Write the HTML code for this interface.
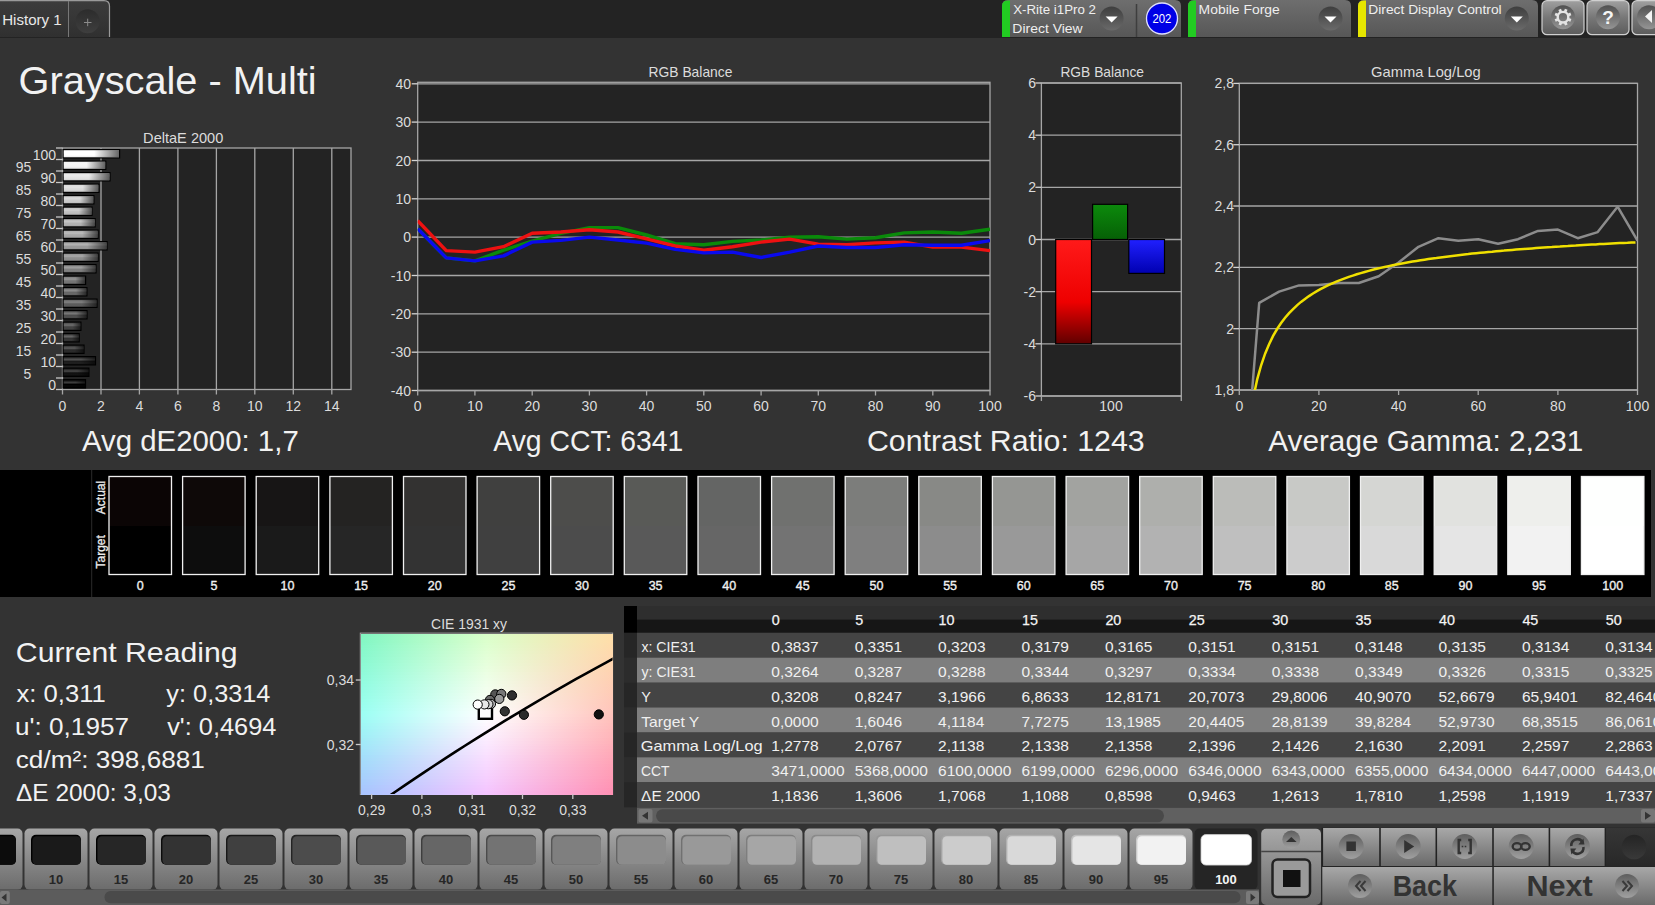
<!DOCTYPE html><html><head><meta charset="utf-8"><title>CalMAN Grayscale - Multi</title><style>
html,body{margin:0;padding:0;background:#333;overflow:hidden;}
body{width:1655px;height:905px;position:relative;font-family:"Liberation Sans", sans-serif;}
svg text{font-family:"Liberation Sans", sans-serif;}
</style></head><body>
<svg width="1655" height="905" viewBox="0 0 1655 905" style="position:absolute;left:0;top:0">
<defs>
<linearGradient id="tabg" x1="0" y1="0" x2="0" y2="1"><stop offset="0" stop-color="#3c3c3c"/><stop offset="1" stop-color="#303030"/></linearGradient>
<linearGradient id="devg" x1="0" y1="0" x2="0" y2="1"><stop offset="0" stop-color="#6e6e6e"/><stop offset="1" stop-color="#575757"/></linearGradient>
<radialGradient id="ddg" cx="0.5" cy="0.5" r="0.5"><stop offset="0" stop-color="#555"/><stop offset="1" stop-color="#4a4a4a"/></radialGradient>
<linearGradient id="ddl" x1="0" y1="0" x2="0" y2="1"><stop offset="0" stop-color="#3e3e3e"/><stop offset="1" stop-color="#6a6a6a"/></linearGradient>
<linearGradient id="btng" x1="0" y1="0" x2="0" y2="1"><stop offset="0" stop-color="#a0a0a0"/><stop offset="0.5" stop-color="#777"/><stop offset="1" stop-color="#5c5c5c"/></linearGradient>
<linearGradient id="tbic" x1="0" y1="0" x2="0" y2="1"><stop offset="0" stop-color="#505050"/><stop offset="1" stop-color="#959595"/></linearGradient>
<linearGradient id="patg" x1="0" y1="0" x2="0" y2="1"><stop offset="0" stop-color="#a6a6a6"/><stop offset="1" stop-color="#6c6c6c"/></linearGradient>
<linearGradient id="ctlg" x1="0" y1="0" x2="0" y2="1"><stop offset="0" stop-color="#a8a8a8"/><stop offset="1" stop-color="#6a6a6a"/></linearGradient>
<linearGradient id="icog" x1="0" y1="0" x2="0" y2="1"><stop offset="0" stop-color="#5e5e5e"/><stop offset="1" stop-color="#a0a0a0"/></linearGradient>
<linearGradient id="redg" x1="0" y1="0" x2="0" y2="1"><stop offset="0" stop-color="#ff1a1a"/><stop offset="0.6" stop-color="#ee0000"/><stop offset="1" stop-color="#600000"/></linearGradient>
<linearGradient id="grng" x1="0" y1="0" x2="0" y2="1"><stop offset="0" stop-color="#0c8a0c"/><stop offset="1" stop-color="#066006"/></linearGradient>
<linearGradient id="blug" x1="0" y1="0" x2="0" y2="1"><stop offset="0" stop-color="#2020ff"/><stop offset="1" stop-color="#0000b0"/></linearGradient>
<linearGradient id="barhl" x1="0" y1="0" x2="0" y2="1"><stop offset="0" stop-color="#fff" stop-opacity="0.05"/><stop offset="0.35" stop-color="#fff" stop-opacity="0.25"/><stop offset="0.6" stop-color="#fff" stop-opacity="0"/><stop offset="1" stop-color="#000" stop-opacity="0.1"/></linearGradient>
<linearGradient id="barsh" x1="0" y1="0" x2="1" y2="0"><stop offset="0" stop-color="#000" stop-opacity="0"/><stop offset="0.55" stop-color="#000" stop-opacity="0"/><stop offset="1" stop-color="#000" stop-opacity="0.6"/></linearGradient>
</defs>
<rect x="0" y="0" width="1655" height="38" fill="#232323"/>
<path d="M0 0 H104 Q110 0 110 6 V37 H0 Z" fill="url(#tabg)"/>
<path d="M0 0.6 H104 Q109.5 0.6 109.5 6 V37" fill="none" stroke="#9a9a9a" stroke-width="1.2"/>
<line x1="68.5" y1="1" x2="68.5" y2="37" stroke="#777" stroke-width="1"/>
<text x="2.19" y="25.00" font-size="14.7" fill="#e8e8e8" textLength="59.49" lengthAdjust="spacingAndGlyphs">History 1</text>
<linearGradient id="plusg" x1="0" y1="0" x2="0" y2="1"><stop offset="0" stop-color="#2c2c2c"/><stop offset="1" stop-color="#3e3e3e"/></linearGradient>
<circle cx="87.6" cy="21.3" r="12" fill="url(#plusg)"/>
<path d="M84 22.5 H91.5 M87.7 18.7 V26.2" stroke="#8c8c8c" stroke-width="1"/>
<path d="M1002 37 V6 Q1002 0 1008 0 H1175 Q1181 0 1181 6 V37 Z" fill="url(#devg)"/>
<path d="M1002 37 V6 Q1002 0.5 1008 0.5 H1010 V37 Z" fill="#22cc22"/>
<text x="1013.17" y="14.30" font-size="12.5" fill="#efefef" textLength="82.80" lengthAdjust="spacingAndGlyphs">X-Rite i1Pro 2</text>
<text x="1012.39" y="32.60" font-size="12.5" fill="#efefef" textLength="70.20" lengthAdjust="spacingAndGlyphs">Direct View</text>
<circle cx="1111.6" cy="18.5" r="12" fill="url(#ddl)"/>
<path d="M1105.6 16.5 L1117.6 16.5 L1111.6 22.5 Z" fill="#fff"/>
<line x1="1136.5" y1="4" x2="1136.5" y2="37" stroke="#3e3e3e" stroke-width="1.5"/>
<circle cx="1162" cy="18.5" r="15.5" fill="#0000e6" stroke="#e0e0ff" stroke-width="1.3"/>
<text x="1152.43" y="22.60" font-size="12.5" fill="#fff" textLength="18.98" lengthAdjust="spacingAndGlyphs">202</text>
<path d="M1188 37 V6 Q1188 0 1194 0 H1345 Q1351 0 1351 6 V37 Z" fill="url(#devg)"/>
<path d="M1188 37 V6 Q1188 0.5 1194 0.5 H1196 V37 Z" fill="#22cc22"/>
<text x="1198.59" y="14.30" font-size="12.5" fill="#efefef" textLength="81.15" lengthAdjust="spacingAndGlyphs">Mobile Forge</text>
<circle cx="1330.5" cy="18.5" r="12" fill="url(#ddl)"/>
<path d="M1324.5 16.5 L1336.5 16.5 L1330.5 22.5 Z" fill="#fff"/>
<path d="M1358 37 V6 Q1358 0 1364 0 H1532 Q1538 0 1538 6 V37 Z" fill="url(#devg)"/>
<path d="M1358 37 V6 Q1358 0.5 1364 0.5 H1366 V37 Z" fill="#e6e600"/>
<text x="1368.30" y="13.90" font-size="12.5" fill="#efefef" textLength="133.40" lengthAdjust="spacingAndGlyphs">Direct Display Control</text>
<circle cx="1516.8" cy="18.5" r="12" fill="url(#ddl)"/>
<path d="M1510.8 16.5 L1522.8 16.5 L1516.8 22.5 Z" fill="#fff"/>
<rect x="1542.0" y="0.7" width="42.0" height="34" rx="5" fill="url(#btng)" stroke="#d0d0d0" stroke-width="1.2"/>
<circle cx="1563.0" cy="17.2" r="12" fill="url(#tbic)"/>
<rect x="1561.60" y="8.70" width="2.8" height="3.4" fill="#e4e4e4" transform="rotate(22 1563.0 17.2)"/><rect x="1561.60" y="8.70" width="2.8" height="3.4" fill="#e4e4e4" transform="rotate(67 1563.0 17.2)"/><rect x="1561.60" y="8.70" width="2.8" height="3.4" fill="#e4e4e4" transform="rotate(112 1563.0 17.2)"/><rect x="1561.60" y="8.70" width="2.8" height="3.4" fill="#e4e4e4" transform="rotate(157 1563.0 17.2)"/><rect x="1561.60" y="8.70" width="2.8" height="3.4" fill="#e4e4e4" transform="rotate(202 1563.0 17.2)"/><rect x="1561.60" y="8.70" width="2.8" height="3.4" fill="#e4e4e4" transform="rotate(247 1563.0 17.2)"/><rect x="1561.60" y="8.70" width="2.8" height="3.4" fill="#e4e4e4" transform="rotate(292 1563.0 17.2)"/><rect x="1561.60" y="8.70" width="2.8" height="3.4" fill="#e4e4e4" transform="rotate(337 1563.0 17.2)"/>
<circle cx="1563.0" cy="17.2" r="5.3" fill="none" stroke="#e4e4e4" stroke-width="2.4"/>
<rect x="1587.0" y="0.7" width="42.0" height="34" rx="5" fill="url(#btng)" stroke="#d0d0d0" stroke-width="1.2"/>
<circle cx="1608.0" cy="17.2" r="12" fill="url(#tbic)"/>
<text x="1608.0" y="24.3" font-size="19" font-weight="bold" fill="#f6f6f6" text-anchor="middle">?</text>
<rect x="1632" y="0.7" width="40" height="34" rx="5" fill="url(#btng)" stroke="#d0d0d0" stroke-width="1.2"/>
<circle cx="1649" cy="17.2" r="12" fill="url(#tbic)"/>
<path d="M1645 16.5 L1652 10 V23 Z" fill="#f4f4f4"/>
<text x="18.61" y="93.70" font-size="38.5" fill="#f2f2f2" textLength="298.03" lengthAdjust="spacingAndGlyphs">Grayscale - Multi</text>
<rect x="62.5" y="148.0" width="288.5" height="241.5" fill="#232323" stroke="#a6a6a6" stroke-width="1.3"/>
<line x1="101.0" y1="148.0" x2="101.0" y2="389.5" stroke="#a6a6a6" stroke-width="1.3"/>
<line x1="139.4" y1="148.0" x2="139.4" y2="389.5" stroke="#a6a6a6" stroke-width="1.3"/>
<line x1="177.9" y1="148.0" x2="177.9" y2="389.5" stroke="#a6a6a6" stroke-width="1.3"/>
<line x1="216.4" y1="148.0" x2="216.4" y2="389.5" stroke="#a6a6a6" stroke-width="1.3"/>
<line x1="254.8" y1="148.0" x2="254.8" y2="389.5" stroke="#a6a6a6" stroke-width="1.3"/>
<line x1="293.3" y1="148.0" x2="293.3" y2="389.5" stroke="#a6a6a6" stroke-width="1.3"/>
<line x1="331.8" y1="148.0" x2="331.8" y2="389.5" stroke="#a6a6a6" stroke-width="1.3"/>
<line x1="62.5" y1="389.5" x2="62.5" y2="394.5" stroke="#a6a6a6" stroke-width="1.3"/>
<text x="62.5" y="411.0" font-size="14" fill="#dcdcdc" text-anchor="middle">0</text>
<line x1="101.0" y1="389.5" x2="101.0" y2="394.5" stroke="#a6a6a6" stroke-width="1.3"/>
<text x="101.0" y="411.0" font-size="14" fill="#dcdcdc" text-anchor="middle">2</text>
<line x1="139.4" y1="389.5" x2="139.4" y2="394.5" stroke="#a6a6a6" stroke-width="1.3"/>
<text x="139.4" y="411.0" font-size="14" fill="#dcdcdc" text-anchor="middle">4</text>
<line x1="177.9" y1="389.5" x2="177.9" y2="394.5" stroke="#a6a6a6" stroke-width="1.3"/>
<text x="177.9" y="411.0" font-size="14" fill="#dcdcdc" text-anchor="middle">6</text>
<line x1="216.4" y1="389.5" x2="216.4" y2="394.5" stroke="#a6a6a6" stroke-width="1.3"/>
<text x="216.4" y="411.0" font-size="14" fill="#dcdcdc" text-anchor="middle">8</text>
<line x1="254.8" y1="389.5" x2="254.8" y2="394.5" stroke="#a6a6a6" stroke-width="1.3"/>
<text x="254.8" y="411.0" font-size="14" fill="#dcdcdc" text-anchor="middle">10</text>
<line x1="293.3" y1="389.5" x2="293.3" y2="394.5" stroke="#a6a6a6" stroke-width="1.3"/>
<text x="293.3" y="411.0" font-size="14" fill="#dcdcdc" text-anchor="middle">12</text>
<line x1="331.8" y1="389.5" x2="331.8" y2="394.5" stroke="#a6a6a6" stroke-width="1.3"/>
<text x="331.8" y="411.0" font-size="14" fill="#dcdcdc" text-anchor="middle">14</text>
<text x="143.13" y="143.10" font-size="14.5" fill="#dcdcdc" textLength="80.16" lengthAdjust="spacingAndGlyphs">DeltaE 2000</text>
<line x1="56" y1="148.0" x2="62.5" y2="148.0" stroke="#c8c8c8" stroke-width="1.3"/>
<line x1="56" y1="159.5" x2="62.5" y2="159.5" stroke="#c8c8c8" stroke-width="1.3"/>
<line x1="56" y1="171.0" x2="62.5" y2="171.0" stroke="#c8c8c8" stroke-width="1.3"/>
<line x1="56" y1="182.5" x2="62.5" y2="182.5" stroke="#c8c8c8" stroke-width="1.3"/>
<line x1="56" y1="194.0" x2="62.5" y2="194.0" stroke="#c8c8c8" stroke-width="1.3"/>
<line x1="56" y1="205.5" x2="62.5" y2="205.5" stroke="#c8c8c8" stroke-width="1.3"/>
<line x1="56" y1="217.0" x2="62.5" y2="217.0" stroke="#c8c8c8" stroke-width="1.3"/>
<line x1="56" y1="228.5" x2="62.5" y2="228.5" stroke="#c8c8c8" stroke-width="1.3"/>
<line x1="56" y1="240.0" x2="62.5" y2="240.0" stroke="#c8c8c8" stroke-width="1.3"/>
<line x1="56" y1="251.5" x2="62.5" y2="251.5" stroke="#c8c8c8" stroke-width="1.3"/>
<line x1="56" y1="263.0" x2="62.5" y2="263.0" stroke="#c8c8c8" stroke-width="1.3"/>
<line x1="56" y1="274.5" x2="62.5" y2="274.5" stroke="#c8c8c8" stroke-width="1.3"/>
<line x1="56" y1="286.0" x2="62.5" y2="286.0" stroke="#c8c8c8" stroke-width="1.3"/>
<line x1="56" y1="297.5" x2="62.5" y2="297.5" stroke="#c8c8c8" stroke-width="1.3"/>
<line x1="56" y1="309.0" x2="62.5" y2="309.0" stroke="#c8c8c8" stroke-width="1.3"/>
<line x1="56" y1="320.5" x2="62.5" y2="320.5" stroke="#c8c8c8" stroke-width="1.3"/>
<line x1="56" y1="332.0" x2="62.5" y2="332.0" stroke="#c8c8c8" stroke-width="1.3"/>
<line x1="56" y1="343.5" x2="62.5" y2="343.5" stroke="#c8c8c8" stroke-width="1.3"/>
<line x1="56" y1="355.0" x2="62.5" y2="355.0" stroke="#c8c8c8" stroke-width="1.3"/>
<line x1="56" y1="366.5" x2="62.5" y2="366.5" stroke="#c8c8c8" stroke-width="1.3"/>
<line x1="56" y1="378.0" x2="62.5" y2="378.0" stroke="#c8c8c8" stroke-width="1.3"/>
<line x1="56" y1="389.5" x2="62.5" y2="389.5" stroke="#c8c8c8" stroke-width="1.3"/>
<rect x="63.1" y="149.6" width="56.5" height="8.3" fill="#ffffff" stroke="#000" stroke-width="1.2"/>
<rect x="63.7" y="150.2" width="55.3" height="7.1" fill="url(#barhl)"/>
<rect x="63.7" y="150.2" width="55.3" height="7.1" fill="url(#barsh)"/>
<text x="56.0" y="159.8" font-size="14" fill="#dcdcdc" text-anchor="end">100</text>
<rect x="63.1" y="161.1" width="42.7" height="8.3" fill="#f2f2f2" stroke="#000" stroke-width="1.2"/>
<rect x="63.7" y="161.7" width="41.5" height="7.1" fill="url(#barhl)"/>
<rect x="63.7" y="161.7" width="41.5" height="7.1" fill="url(#barsh)"/>
<text x="31.3" y="171.6" font-size="14" fill="#dcdcdc" text-anchor="end">95</text>
<rect x="63.1" y="172.6" width="46.9" height="8.3" fill="#e5e5e5" stroke="#000" stroke-width="1.2"/>
<rect x="63.7" y="173.2" width="45.7" height="7.1" fill="url(#barhl)"/>
<rect x="63.7" y="173.2" width="45.7" height="7.1" fill="url(#barsh)"/>
<text x="56.0" y="182.8" font-size="14" fill="#dcdcdc" text-anchor="end">90</text>
<rect x="63.1" y="184.1" width="35.8" height="8.3" fill="#d9d9d9" stroke="#000" stroke-width="1.2"/>
<rect x="63.7" y="184.7" width="34.6" height="7.1" fill="url(#barhl)"/>
<rect x="63.7" y="184.7" width="34.6" height="7.1" fill="url(#barsh)"/>
<text x="31.3" y="194.6" font-size="14" fill="#dcdcdc" text-anchor="end">85</text>
<rect x="63.1" y="195.6" width="30.8" height="8.3" fill="#cccccc" stroke="#000" stroke-width="1.2"/>
<rect x="63.7" y="196.2" width="29.6" height="7.1" fill="url(#barhl)"/>
<rect x="63.7" y="196.2" width="29.6" height="7.1" fill="url(#barsh)"/>
<text x="56.0" y="205.8" font-size="14" fill="#dcdcdc" text-anchor="end">80</text>
<rect x="63.1" y="207.1" width="29.0" height="8.3" fill="#bfbfbf" stroke="#000" stroke-width="1.2"/>
<rect x="63.7" y="207.7" width="27.8" height="7.1" fill="url(#barhl)"/>
<rect x="63.7" y="207.7" width="27.8" height="7.1" fill="url(#barsh)"/>
<text x="31.3" y="217.6" font-size="14" fill="#dcdcdc" text-anchor="end">75</text>
<rect x="63.1" y="218.6" width="32.1" height="8.3" fill="#b2b2b2" stroke="#000" stroke-width="1.2"/>
<rect x="63.7" y="219.2" width="30.9" height="7.1" fill="url(#barhl)"/>
<rect x="63.7" y="219.2" width="30.9" height="7.1" fill="url(#barsh)"/>
<text x="56.0" y="228.8" font-size="14" fill="#dcdcdc" text-anchor="end">70</text>
<rect x="63.1" y="230.1" width="35.0" height="8.3" fill="#a6a6a6" stroke="#000" stroke-width="1.2"/>
<rect x="63.7" y="230.7" width="33.8" height="7.1" fill="url(#barhl)"/>
<rect x="63.7" y="230.7" width="33.8" height="7.1" fill="url(#barsh)"/>
<text x="31.3" y="240.6" font-size="14" fill="#dcdcdc" text-anchor="end">65</text>
<rect x="63.1" y="241.6" width="44.0" height="8.3" fill="#999999" stroke="#000" stroke-width="1.2"/>
<rect x="63.7" y="242.2" width="42.8" height="7.1" fill="url(#barhl)"/>
<rect x="63.7" y="242.2" width="42.8" height="7.1" fill="url(#barsh)"/>
<text x="56.0" y="251.8" font-size="14" fill="#dcdcdc" text-anchor="end">60</text>
<rect x="63.1" y="253.1" width="35.0" height="8.3" fill="#8c8c8c" stroke="#000" stroke-width="1.2"/>
<rect x="63.7" y="253.7" width="33.8" height="7.1" fill="url(#barhl)"/>
<rect x="63.7" y="253.7" width="33.8" height="7.1" fill="url(#barsh)"/>
<text x="31.3" y="263.6" font-size="14" fill="#dcdcdc" text-anchor="end">55</text>
<rect x="63.1" y="264.6" width="32.9" height="8.3" fill="#7f7f7f" stroke="#000" stroke-width="1.2"/>
<rect x="63.7" y="265.2" width="31.7" height="7.1" fill="url(#barhl)"/>
<rect x="63.7" y="265.2" width="31.7" height="7.1" fill="url(#barsh)"/>
<text x="56.0" y="274.8" font-size="14" fill="#dcdcdc" text-anchor="end">50</text>
<rect x="63.1" y="276.1" width="22.5" height="8.3" fill="#737373" stroke="#000" stroke-width="1.2"/>
<rect x="63.7" y="276.7" width="21.3" height="7.1" fill="url(#barhl)"/>
<rect x="63.7" y="276.7" width="21.3" height="7.1" fill="url(#barsh)"/>
<text x="31.3" y="286.6" font-size="14" fill="#dcdcdc" text-anchor="end">45</text>
<rect x="63.1" y="287.6" width="23.8" height="8.3" fill="#666666" stroke="#000" stroke-width="1.2"/>
<rect x="63.7" y="288.2" width="22.6" height="7.1" fill="url(#barhl)"/>
<rect x="63.7" y="288.2" width="22.6" height="7.1" fill="url(#barsh)"/>
<text x="56.0" y="297.8" font-size="14" fill="#dcdcdc" text-anchor="end">40</text>
<rect x="63.1" y="299.1" width="33.9" height="8.3" fill="#595959" stroke="#000" stroke-width="1.2"/>
<rect x="63.7" y="299.7" width="32.7" height="7.1" fill="url(#barhl)"/>
<rect x="63.7" y="299.7" width="32.7" height="7.1" fill="url(#barsh)"/>
<text x="31.3" y="309.6" font-size="14" fill="#dcdcdc" text-anchor="end">35</text>
<rect x="63.1" y="310.6" width="23.9" height="8.3" fill="#4c4c4c" stroke="#000" stroke-width="1.2"/>
<rect x="63.7" y="311.2" width="22.7" height="7.1" fill="url(#barhl)"/>
<rect x="63.7" y="311.2" width="22.7" height="7.1" fill="url(#barsh)"/>
<text x="56.0" y="320.8" font-size="14" fill="#dcdcdc" text-anchor="end">30</text>
<rect x="63.1" y="322.1" width="17.8" height="8.3" fill="#404040" stroke="#000" stroke-width="1.2"/>
<rect x="63.7" y="322.7" width="16.6" height="7.1" fill="url(#barhl)"/>
<rect x="63.7" y="322.7" width="16.6" height="7.1" fill="url(#barsh)"/>
<text x="31.3" y="332.6" font-size="14" fill="#dcdcdc" text-anchor="end">25</text>
<rect x="63.1" y="333.6" width="16.1" height="8.3" fill="#333333" stroke="#000" stroke-width="1.2"/>
<rect x="63.7" y="334.2" width="14.9" height="7.1" fill="url(#barhl)"/>
<rect x="63.7" y="334.2" width="14.9" height="7.1" fill="url(#barsh)"/>
<text x="56.0" y="343.8" font-size="14" fill="#dcdcdc" text-anchor="end">20</text>
<rect x="63.1" y="345.1" width="20.9" height="8.3" fill="#262626" stroke="#000" stroke-width="1.2"/>
<rect x="63.7" y="345.7" width="19.7" height="7.1" fill="url(#barhl)"/>
<rect x="63.7" y="345.7" width="19.7" height="7.1" fill="url(#barsh)"/>
<text x="31.3" y="355.6" font-size="14" fill="#dcdcdc" text-anchor="end">15</text>
<rect x="63.1" y="356.6" width="32.4" height="8.3" fill="#1a1a1a" stroke="#000" stroke-width="1.2"/>
<rect x="63.7" y="357.2" width="31.2" height="7.1" fill="url(#barhl)"/>
<rect x="63.7" y="357.2" width="31.2" height="7.1" fill="url(#barsh)"/>
<text x="56.0" y="366.8" font-size="14" fill="#dcdcdc" text-anchor="end">10</text>
<rect x="63.1" y="368.1" width="25.8" height="8.3" fill="#0d0d0d" stroke="#000" stroke-width="1.2"/>
<rect x="63.7" y="368.7" width="24.6" height="7.1" fill="url(#barhl)"/>
<rect x="63.7" y="368.7" width="24.6" height="7.1" fill="url(#barsh)"/>
<text x="31.3" y="378.6" font-size="14" fill="#dcdcdc" text-anchor="end">5</text>
<rect x="63.1" y="379.6" width="22.4" height="8.3" fill="#000000" stroke="#000" stroke-width="1.2"/>
<rect x="63.7" y="380.2" width="21.2" height="7.1" fill="url(#barhl)"/>
<rect x="63.7" y="380.2" width="21.2" height="7.1" fill="url(#barsh)"/>
<text x="56.0" y="389.8" font-size="14" fill="#dcdcdc" text-anchor="end">0</text>
<rect x="417.7" y="82.3" width="572.3" height="308.2" fill="#232323" stroke="#a6a6a6" stroke-width="1.3"/>
<line x1="417.7" y1="390.5" x2="990.0" y2="390.5" stroke="#a6a6a6" stroke-width="1.3"/>
<line x1="411.7" y1="390.5" x2="417.7" y2="390.5" stroke="#d4d4d4" stroke-width="1.3"/>
<text x="411.0" y="395.5" font-size="14" fill="#dcdcdc" text-anchor="end">-40</text>
<line x1="417.7" y1="352.2" x2="990.0" y2="352.2" stroke="#a6a6a6" stroke-width="1.3"/>
<line x1="411.7" y1="352.2" x2="417.7" y2="352.2" stroke="#d4d4d4" stroke-width="1.3"/>
<text x="411.0" y="357.2" font-size="14" fill="#dcdcdc" text-anchor="end">-30</text>
<line x1="417.7" y1="313.8" x2="990.0" y2="313.8" stroke="#a6a6a6" stroke-width="1.3"/>
<line x1="411.7" y1="313.8" x2="417.7" y2="313.8" stroke="#d4d4d4" stroke-width="1.3"/>
<text x="411.0" y="318.8" font-size="14" fill="#dcdcdc" text-anchor="end">-20</text>
<line x1="417.7" y1="275.5" x2="990.0" y2="275.5" stroke="#a6a6a6" stroke-width="1.3"/>
<line x1="411.7" y1="275.5" x2="417.7" y2="275.5" stroke="#d4d4d4" stroke-width="1.3"/>
<text x="411.0" y="280.5" font-size="14" fill="#dcdcdc" text-anchor="end">-10</text>
<line x1="417.7" y1="237.1" x2="990.0" y2="237.1" stroke="#a6a6a6" stroke-width="1.3"/>
<line x1="411.7" y1="237.1" x2="417.7" y2="237.1" stroke="#d4d4d4" stroke-width="1.3"/>
<text x="411.0" y="242.1" font-size="14" fill="#dcdcdc" text-anchor="end">0</text>
<line x1="417.7" y1="198.8" x2="990.0" y2="198.8" stroke="#a6a6a6" stroke-width="1.3"/>
<line x1="411.7" y1="198.8" x2="417.7" y2="198.8" stroke="#d4d4d4" stroke-width="1.3"/>
<text x="411.0" y="203.8" font-size="14" fill="#dcdcdc" text-anchor="end">10</text>
<line x1="417.7" y1="160.5" x2="990.0" y2="160.5" stroke="#a6a6a6" stroke-width="1.3"/>
<line x1="411.7" y1="160.5" x2="417.7" y2="160.5" stroke="#d4d4d4" stroke-width="1.3"/>
<text x="411.0" y="165.5" font-size="14" fill="#dcdcdc" text-anchor="end">20</text>
<line x1="417.7" y1="122.1" x2="990.0" y2="122.1" stroke="#a6a6a6" stroke-width="1.3"/>
<line x1="411.7" y1="122.1" x2="417.7" y2="122.1" stroke="#d4d4d4" stroke-width="1.3"/>
<text x="411.0" y="127.1" font-size="14" fill="#dcdcdc" text-anchor="end">30</text>
<line x1="417.7" y1="83.8" x2="990.0" y2="83.8" stroke="#a6a6a6" stroke-width="1.3"/>
<line x1="411.7" y1="83.8" x2="417.7" y2="83.8" stroke="#d4d4d4" stroke-width="1.3"/>
<text x="411.0" y="88.8" font-size="14" fill="#dcdcdc" text-anchor="end">40</text>
<line x1="417.7" y1="390.5" x2="417.7" y2="395.5" stroke="#a6a6a6" stroke-width="1.3"/>
<text x="417.7" y="411.0" font-size="14" fill="#dcdcdc" text-anchor="middle">0</text>
<line x1="474.9" y1="390.5" x2="474.9" y2="395.5" stroke="#a6a6a6" stroke-width="1.3"/>
<text x="474.9" y="411.0" font-size="14" fill="#dcdcdc" text-anchor="middle">10</text>
<line x1="532.2" y1="390.5" x2="532.2" y2="395.5" stroke="#a6a6a6" stroke-width="1.3"/>
<text x="532.2" y="411.0" font-size="14" fill="#dcdcdc" text-anchor="middle">20</text>
<line x1="589.4" y1="390.5" x2="589.4" y2="395.5" stroke="#a6a6a6" stroke-width="1.3"/>
<text x="589.4" y="411.0" font-size="14" fill="#dcdcdc" text-anchor="middle">30</text>
<line x1="646.6" y1="390.5" x2="646.6" y2="395.5" stroke="#a6a6a6" stroke-width="1.3"/>
<text x="646.6" y="411.0" font-size="14" fill="#dcdcdc" text-anchor="middle">40</text>
<line x1="703.8" y1="390.5" x2="703.8" y2="395.5" stroke="#a6a6a6" stroke-width="1.3"/>
<text x="703.8" y="411.0" font-size="14" fill="#dcdcdc" text-anchor="middle">50</text>
<line x1="761.1" y1="390.5" x2="761.1" y2="395.5" stroke="#a6a6a6" stroke-width="1.3"/>
<text x="761.1" y="411.0" font-size="14" fill="#dcdcdc" text-anchor="middle">60</text>
<line x1="818.3" y1="390.5" x2="818.3" y2="395.5" stroke="#a6a6a6" stroke-width="1.3"/>
<text x="818.3" y="411.0" font-size="14" fill="#dcdcdc" text-anchor="middle">70</text>
<line x1="875.5" y1="390.5" x2="875.5" y2="395.5" stroke="#a6a6a6" stroke-width="1.3"/>
<text x="875.5" y="411.0" font-size="14" fill="#dcdcdc" text-anchor="middle">80</text>
<line x1="932.8" y1="390.5" x2="932.8" y2="395.5" stroke="#a6a6a6" stroke-width="1.3"/>
<text x="932.8" y="411.0" font-size="14" fill="#dcdcdc" text-anchor="middle">90</text>
<line x1="990.0" y1="390.5" x2="990.0" y2="395.5" stroke="#a6a6a6" stroke-width="1.3"/>
<text x="990.0" y="411.0" font-size="14" fill="#dcdcdc" text-anchor="middle">100</text>
<text x="648.59" y="76.90" font-size="14.5" fill="#dcdcdc" textLength="83.81" lengthAdjust="spacingAndGlyphs">RGB Balance</text>
<svg x="417.7" y="83.8" width="572.3" height="306.7" viewBox="417.7 83.8 572.3 306.7" overflow="hidden">
<polyline points="417.7,228.7 446.3,257.9 474.9,260.9 503.5,250.2 532.2,241.2 560.8,233.3 589.4,227.6 618.0,227.6 646.6,235.0 675.2,243.7 703.8,244.8 732.5,241.4 761.1,240.0 789.7,237.1 818.3,236.8 846.9,239.1 875.5,237.7 904.2,232.9 932.8,232.0 961.4,233.3 990.0,229.3" fill="none" stroke="#0a8a0a" stroke-width="3.4" stroke-linejoin="round"/>
<polyline points="417.7,220.7 446.3,250.6 474.9,252.1 503.5,246.7 532.2,233.3 560.8,232.0 589.4,229.7 618.0,232.0 646.6,238.9 675.2,246.0 703.8,250.2 732.5,246.7 761.1,242.1 789.7,239.1 818.3,244.1 846.9,244.8 875.5,242.9 904.2,242.1 932.8,247.1 961.4,247.1 990.0,250.6" fill="none" stroke="#ee1111" stroke-width="3.4" stroke-linejoin="round"/>
<polyline points="417.7,228.7 446.3,257.9 474.9,260.9 503.5,255.9 532.2,242.1 560.8,240.4 589.4,237.1 618.0,240.0 646.6,243.1 675.2,249.4 703.8,252.9 732.5,252.1 761.1,257.5 789.7,252.1 818.3,246.0 846.9,247.5 875.5,247.5 904.2,244.8 932.8,245.2 961.4,245.2 990.0,240.6" fill="none" stroke="#0a0aee" stroke-width="3.4" stroke-linejoin="round"/>
</svg>
<rect x="1041.4" y="83.0" width="139.9" height="313.0" fill="#232323" stroke="#a6a6a6" stroke-width="1.3"/>
<line x1="1041.4" y1="396.0" x2="1181.3" y2="396.0" stroke="#a6a6a6" stroke-width="1.3"/>
<line x1="1035.4" y1="396.0" x2="1041.4" y2="396.0" stroke="#d4d4d4" stroke-width="1.3"/>
<text x="1036.0" y="401.0" font-size="14" fill="#dcdcdc" text-anchor="end">-6</text>
<line x1="1041.4" y1="343.8" x2="1181.3" y2="343.8" stroke="#a6a6a6" stroke-width="1.3"/>
<line x1="1035.4" y1="343.8" x2="1041.4" y2="343.8" stroke="#d4d4d4" stroke-width="1.3"/>
<text x="1036.0" y="348.8" font-size="14" fill="#dcdcdc" text-anchor="end">-4</text>
<line x1="1041.4" y1="291.7" x2="1181.3" y2="291.7" stroke="#a6a6a6" stroke-width="1.3"/>
<line x1="1035.4" y1="291.7" x2="1041.4" y2="291.7" stroke="#d4d4d4" stroke-width="1.3"/>
<text x="1036.0" y="296.7" font-size="14" fill="#dcdcdc" text-anchor="end">-2</text>
<line x1="1041.4" y1="239.5" x2="1181.3" y2="239.5" stroke="#a6a6a6" stroke-width="1.3"/>
<line x1="1035.4" y1="239.5" x2="1041.4" y2="239.5" stroke="#d4d4d4" stroke-width="1.3"/>
<text x="1036.0" y="244.5" font-size="14" fill="#dcdcdc" text-anchor="end">0</text>
<line x1="1041.4" y1="187.3" x2="1181.3" y2="187.3" stroke="#a6a6a6" stroke-width="1.3"/>
<line x1="1035.4" y1="187.3" x2="1041.4" y2="187.3" stroke="#d4d4d4" stroke-width="1.3"/>
<text x="1036.0" y="192.3" font-size="14" fill="#dcdcdc" text-anchor="end">2</text>
<line x1="1041.4" y1="135.2" x2="1181.3" y2="135.2" stroke="#a6a6a6" stroke-width="1.3"/>
<line x1="1035.4" y1="135.2" x2="1041.4" y2="135.2" stroke="#d4d4d4" stroke-width="1.3"/>
<text x="1036.0" y="140.2" font-size="14" fill="#dcdcdc" text-anchor="end">4</text>
<line x1="1041.4" y1="83.0" x2="1181.3" y2="83.0" stroke="#a6a6a6" stroke-width="1.3"/>
<line x1="1035.4" y1="83.0" x2="1041.4" y2="83.0" stroke="#d4d4d4" stroke-width="1.3"/>
<text x="1036.0" y="88.0" font-size="14" fill="#dcdcdc" text-anchor="end">6</text>
<line x1="1041.4" y1="396.0" x2="1041.4" y2="401.0" stroke="#a6a6a6" stroke-width="1.3"/>
<line x1="1181.3" y1="396.0" x2="1181.3" y2="401.0" stroke="#a6a6a6" stroke-width="1.3"/>
<text x="1111.0" y="411.0" font-size="14" fill="#dcdcdc" text-anchor="middle">100</text>
<text x="1060.40" y="76.90" font-size="14.5" fill="#dcdcdc" textLength="83.61" lengthAdjust="spacingAndGlyphs">RGB Balance</text>
<rect x="1055.7" y="239.5" width="35.8" height="104.3" fill="url(#redg)" stroke="#000" stroke-width="1.2"/>
<rect x="1092.6" y="204.3" width="35" height="35.2" fill="url(#grng)" stroke="#000" stroke-width="1.2"/>
<rect x="1128.8" y="239.5" width="35.7" height="33.9" fill="url(#blug)" stroke="#000" stroke-width="1.2"/>
<rect x="1239.3" y="83.4" width="398.2" height="306.6" fill="#232323" stroke="#a6a6a6" stroke-width="1.3"/>
<line x1="1239.3" y1="390.0" x2="1637.5" y2="390.0" stroke="#a6a6a6" stroke-width="1.3"/>
<line x1="1233.3" y1="390.0" x2="1239.3" y2="390.0" stroke="#d4d4d4" stroke-width="1.3"/>
<text x="1234.0" y="395.0" font-size="14" fill="#dcdcdc" text-anchor="end">1,8</text>
<line x1="1239.3" y1="328.7" x2="1637.5" y2="328.7" stroke="#a6a6a6" stroke-width="1.3"/>
<line x1="1233.3" y1="328.7" x2="1239.3" y2="328.7" stroke="#d4d4d4" stroke-width="1.3"/>
<text x="1234.0" y="333.7" font-size="14" fill="#dcdcdc" text-anchor="end">2</text>
<line x1="1239.3" y1="267.4" x2="1637.5" y2="267.4" stroke="#a6a6a6" stroke-width="1.3"/>
<line x1="1233.3" y1="267.4" x2="1239.3" y2="267.4" stroke="#d4d4d4" stroke-width="1.3"/>
<text x="1234.0" y="272.4" font-size="14" fill="#dcdcdc" text-anchor="end">2,2</text>
<line x1="1239.3" y1="206.0" x2="1637.5" y2="206.0" stroke="#a6a6a6" stroke-width="1.3"/>
<line x1="1233.3" y1="206.0" x2="1239.3" y2="206.0" stroke="#d4d4d4" stroke-width="1.3"/>
<text x="1234.0" y="211.0" font-size="14" fill="#dcdcdc" text-anchor="end">2,4</text>
<line x1="1239.3" y1="144.7" x2="1637.5" y2="144.7" stroke="#a6a6a6" stroke-width="1.3"/>
<line x1="1233.3" y1="144.7" x2="1239.3" y2="144.7" stroke="#d4d4d4" stroke-width="1.3"/>
<text x="1234.0" y="149.7" font-size="14" fill="#dcdcdc" text-anchor="end">2,6</text>
<line x1="1239.3" y1="83.4" x2="1637.5" y2="83.4" stroke="#a6a6a6" stroke-width="1.3"/>
<line x1="1233.3" y1="83.4" x2="1239.3" y2="83.4" stroke="#d4d4d4" stroke-width="1.3"/>
<text x="1234.0" y="88.4" font-size="14" fill="#dcdcdc" text-anchor="end">2,8</text>
<line x1="1239.3" y1="390.0" x2="1239.3" y2="395.0" stroke="#a6a6a6" stroke-width="1.3"/>
<text x="1239.3" y="411.0" font-size="14" fill="#dcdcdc" text-anchor="middle">0</text>
<line x1="1318.9" y1="390.0" x2="1318.9" y2="395.0" stroke="#a6a6a6" stroke-width="1.3"/>
<text x="1318.9" y="411.0" font-size="14" fill="#dcdcdc" text-anchor="middle">20</text>
<line x1="1398.6" y1="390.0" x2="1398.6" y2="395.0" stroke="#a6a6a6" stroke-width="1.3"/>
<text x="1398.6" y="411.0" font-size="14" fill="#dcdcdc" text-anchor="middle">40</text>
<line x1="1478.2" y1="390.0" x2="1478.2" y2="395.0" stroke="#a6a6a6" stroke-width="1.3"/>
<text x="1478.2" y="411.0" font-size="14" fill="#dcdcdc" text-anchor="middle">60</text>
<line x1="1557.9" y1="390.0" x2="1557.9" y2="395.0" stroke="#a6a6a6" stroke-width="1.3"/>
<text x="1557.9" y="411.0" font-size="14" fill="#dcdcdc" text-anchor="middle">80</text>
<line x1="1637.5" y1="390.0" x2="1637.5" y2="395.0" stroke="#a6a6a6" stroke-width="1.3"/>
<text x="1637.5" y="411.0" font-size="14" fill="#dcdcdc" text-anchor="middle">100</text>
<text x="1371.06" y="76.80" font-size="14.5" fill="#dcdcdc" textLength="109.68" lengthAdjust="spacingAndGlyphs">Gamma Log/Log</text>
<svg x="1239.3" y="83.4" width="398.2" height="306.6" viewBox="1239.3 83.4 398.2 306.6" overflow="hidden">
<polyline points="1239.3,550.1 1259.2,302.9 1279.1,291.6 1299.0,285.4 1318.9,285.1 1338.8,283.0 1358.8,283.0 1378.7,276.3 1398.6,262.5 1418.5,246.8 1438.4,238.2 1458.3,240.7 1478.2,239.2 1498.1,243.8 1518.0,239.2 1538.0,230.9 1557.9,229.6 1577.8,238.2 1597.7,232.1 1617.6,206.7 1637.5,240.7" fill="none" stroke="#8c8c8c" stroke-width="2.5" stroke-linejoin="round"/>
<polyline points="1253.2,398.1 1257.2,379.4 1261.2,365.0 1265.2,353.4 1269.2,343.9 1273.1,335.9 1277.1,329.0 1281.1,323.1 1285.1,317.8 1289.1,313.2 1293.1,309.1 1297.0,305.3 1301.0,301.9 1305.0,298.9 1309.0,296.1 1313.0,293.5 1316.9,291.1 1320.9,288.9 1324.9,286.8 1328.9,284.9 1332.9,283.1 1336.9,281.4 1340.8,279.8 1344.8,278.3 1348.8,276.9 1352.8,275.6 1356.8,274.3 1360.8,273.1 1364.7,272.0 1368.7,270.9 1372.7,269.8 1376.7,268.8 1380.7,267.9 1384.6,267.0 1388.6,266.1 1392.6,265.3 1396.6,264.5 1400.6,263.7 1404.6,263.0 1408.5,262.3 1412.5,261.6 1416.5,260.9 1420.5,260.3 1424.5,259.7 1428.4,259.1 1432.4,258.5 1436.4,258.0 1440.4,257.4 1444.4,256.9 1448.4,256.4 1452.3,255.9 1456.3,255.4 1460.3,254.9 1464.3,254.5 1468.3,254.1 1472.2,253.6 1476.2,253.2 1480.2,252.8 1484.2,252.4 1488.2,252.0 1492.2,251.7 1496.1,251.3 1500.1,250.9 1504.1,250.6 1508.1,250.2 1512.1,249.9 1516.0,249.6 1520.0,249.3 1524.0,249.0 1528.0,248.7 1532.0,248.4 1536.0,248.1 1539.9,247.8 1543.9,247.5 1547.9,247.2 1551.9,247.0 1555.9,246.7 1559.9,246.5 1563.8,246.2 1567.8,246.0 1571.8,245.7 1575.8,245.5 1579.8,245.2 1583.7,245.0 1587.7,244.8 1591.7,244.6 1595.7,244.4 1599.7,244.1 1603.7,243.9 1607.6,243.7 1611.6,243.5 1615.6,243.3 1619.6,243.1 1623.6,242.9 1627.5,242.8 1631.5,242.6 1635.5,242.4" fill="none" stroke="#f0e000" stroke-width="2.5"/>
</svg>
<text x="82.00" y="450.80" font-size="29" fill="#f2f2f2" textLength="216.72" lengthAdjust="spacingAndGlyphs">Avg dE2000: 1,7</text>
<text x="493.30" y="450.80" font-size="29" fill="#f2f2f2" textLength="190.05" lengthAdjust="spacingAndGlyphs">Avg CCT: 6341</text>
<text x="866.99" y="450.80" font-size="29" fill="#f2f2f2" textLength="277.59" lengthAdjust="spacingAndGlyphs">Contrast Ratio: 1243</text>
<text x="1268.30" y="450.80" font-size="29" fill="#f2f2f2" textLength="315.00" lengthAdjust="spacingAndGlyphs">Average Gamma: 2,231</text>
<rect x="0" y="470" width="1651" height="127" fill="#000"/>
<line x1="91.7" y1="470" x2="91.7" y2="597" stroke="#2a2a2a" stroke-width="1"/>
<text font-size="12" fill="#ececec" stroke="#ececec" stroke-width="0.3" text-anchor="middle" transform="translate(104.6 497.5) rotate(-90)">Actual</text>
<text font-size="12" fill="#ececec" stroke="#ececec" stroke-width="0.3" text-anchor="middle" transform="translate(104.6 551.8) rotate(-90)">Target</text>
<rect x="109.0" y="476.5" width="62.5" height="98" fill="#000000"/>
<rect x="109.0" y="476.5" width="62.5" height="49" fill="#0b0505" shape-rendering="crispEdges"/>
<rect x="109.0" y="476.5" width="62.5" height="98" fill="none" stroke="#f0f0f0" stroke-width="1.3"/>
<text x="140.2" y="589.5" font-size="12.5" fill="#f0f0f0" text-anchor="middle" stroke="#f0f0f0" stroke-width="0.35">0</text>
<rect x="182.6" y="476.5" width="62.5" height="98" fill="#0d0d0d"/>
<rect x="182.6" y="476.5" width="62.5" height="49" fill="#0e0908" shape-rendering="crispEdges"/>
<rect x="182.6" y="476.5" width="62.5" height="98" fill="none" stroke="#f0f0f0" stroke-width="1.3"/>
<text x="213.9" y="589.5" font-size="12.5" fill="#f0f0f0" text-anchor="middle" stroke="#f0f0f0" stroke-width="0.35">5</text>
<rect x="256.2" y="476.5" width="62.5" height="98" fill="#1a1a1a"/>
<rect x="256.2" y="476.5" width="62.5" height="49" fill="#171515" shape-rendering="crispEdges"/>
<rect x="256.2" y="476.5" width="62.5" height="98" fill="none" stroke="#f0f0f0" stroke-width="1.3"/>
<text x="287.5" y="589.5" font-size="12.5" fill="#f0f0f0" text-anchor="middle" stroke="#f0f0f0" stroke-width="0.35">10</text>
<rect x="329.9" y="476.5" width="62.5" height="98" fill="#262626"/>
<rect x="329.9" y="476.5" width="62.5" height="49" fill="#242322" shape-rendering="crispEdges"/>
<rect x="329.9" y="476.5" width="62.5" height="98" fill="none" stroke="#f0f0f0" stroke-width="1.3"/>
<text x="361.1" y="589.5" font-size="12.5" fill="#f0f0f0" text-anchor="middle" stroke="#f0f0f0" stroke-width="0.35">15</text>
<rect x="403.5" y="476.5" width="62.5" height="98" fill="#333333"/>
<rect x="403.5" y="476.5" width="62.5" height="49" fill="#333231" shape-rendering="crispEdges"/>
<rect x="403.5" y="476.5" width="62.5" height="98" fill="none" stroke="#f0f0f0" stroke-width="1.3"/>
<text x="434.7" y="589.5" font-size="12.5" fill="#f0f0f0" text-anchor="middle" stroke="#f0f0f0" stroke-width="0.35">20</text>
<rect x="477.1" y="476.5" width="62.5" height="98" fill="#404040"/>
<rect x="477.1" y="476.5" width="62.5" height="49" fill="#40403f" shape-rendering="crispEdges"/>
<rect x="477.1" y="476.5" width="62.5" height="98" fill="none" stroke="#f0f0f0" stroke-width="1.3"/>
<text x="508.4" y="589.5" font-size="12.5" fill="#f0f0f0" text-anchor="middle" stroke="#f0f0f0" stroke-width="0.35">25</text>
<rect x="550.7" y="476.5" width="62.5" height="98" fill="#4c4c4c"/>
<rect x="550.7" y="476.5" width="62.5" height="49" fill="#4d4d4b" shape-rendering="crispEdges"/>
<rect x="550.7" y="476.5" width="62.5" height="98" fill="none" stroke="#f0f0f0" stroke-width="1.3"/>
<text x="582.0" y="589.5" font-size="12.5" fill="#f0f0f0" text-anchor="middle" stroke="#f0f0f0" stroke-width="0.35">30</text>
<rect x="624.3" y="476.5" width="62.5" height="98" fill="#595959"/>
<rect x="624.3" y="476.5" width="62.5" height="49" fill="#595a57" shape-rendering="crispEdges"/>
<rect x="624.3" y="476.5" width="62.5" height="98" fill="none" stroke="#f0f0f0" stroke-width="1.3"/>
<text x="655.6" y="589.5" font-size="12.5" fill="#f0f0f0" text-anchor="middle" stroke="#f0f0f0" stroke-width="0.35">35</text>
<rect x="698.0" y="476.5" width="62.5" height="98" fill="#666666"/>
<rect x="698.0" y="476.5" width="62.5" height="49" fill="#646564" shape-rendering="crispEdges"/>
<rect x="698.0" y="476.5" width="62.5" height="98" fill="none" stroke="#f0f0f0" stroke-width="1.3"/>
<text x="729.2" y="589.5" font-size="12.5" fill="#f0f0f0" text-anchor="middle" stroke="#f0f0f0" stroke-width="0.35">40</text>
<rect x="771.6" y="476.5" width="62.5" height="98" fill="#737373"/>
<rect x="771.6" y="476.5" width="62.5" height="49" fill="#70716f" shape-rendering="crispEdges"/>
<rect x="771.6" y="476.5" width="62.5" height="98" fill="none" stroke="#f0f0f0" stroke-width="1.3"/>
<text x="802.8" y="589.5" font-size="12.5" fill="#f0f0f0" text-anchor="middle" stroke="#f0f0f0" stroke-width="0.35">45</text>
<rect x="845.2" y="476.5" width="62.5" height="98" fill="#7f7f7f"/>
<rect x="845.2" y="476.5" width="62.5" height="49" fill="#7c7d7b" shape-rendering="crispEdges"/>
<rect x="845.2" y="476.5" width="62.5" height="98" fill="none" stroke="#f0f0f0" stroke-width="1.3"/>
<text x="876.5" y="589.5" font-size="12.5" fill="#f0f0f0" text-anchor="middle" stroke="#f0f0f0" stroke-width="0.35">50</text>
<rect x="918.8" y="476.5" width="62.5" height="98" fill="#8c8c8c"/>
<rect x="918.8" y="476.5" width="62.5" height="49" fill="#888986" shape-rendering="crispEdges"/>
<rect x="918.8" y="476.5" width="62.5" height="98" fill="none" stroke="#f0f0f0" stroke-width="1.3"/>
<text x="950.1" y="589.5" font-size="12.5" fill="#f0f0f0" text-anchor="middle" stroke="#f0f0f0" stroke-width="0.35">55</text>
<rect x="992.4" y="476.5" width="62.5" height="98" fill="#999999"/>
<rect x="992.4" y="476.5" width="62.5" height="49" fill="#959693" shape-rendering="crispEdges"/>
<rect x="992.4" y="476.5" width="62.5" height="98" fill="none" stroke="#f0f0f0" stroke-width="1.3"/>
<text x="1023.7" y="589.5" font-size="12.5" fill="#f0f0f0" text-anchor="middle" stroke="#f0f0f0" stroke-width="0.35">60</text>
<rect x="1066.1" y="476.5" width="62.5" height="98" fill="#a6a6a6"/>
<rect x="1066.1" y="476.5" width="62.5" height="49" fill="#a2a3a0" shape-rendering="crispEdges"/>
<rect x="1066.1" y="476.5" width="62.5" height="98" fill="none" stroke="#f0f0f0" stroke-width="1.3"/>
<text x="1097.3" y="589.5" font-size="12.5" fill="#f0f0f0" text-anchor="middle" stroke="#f0f0f0" stroke-width="0.35">65</text>
<rect x="1139.7" y="476.5" width="62.5" height="98" fill="#b2b2b2"/>
<rect x="1139.7" y="476.5" width="62.5" height="49" fill="#aeafac" shape-rendering="crispEdges"/>
<rect x="1139.7" y="476.5" width="62.5" height="98" fill="none" stroke="#f0f0f0" stroke-width="1.3"/>
<text x="1170.9" y="589.5" font-size="12.5" fill="#f0f0f0" text-anchor="middle" stroke="#f0f0f0" stroke-width="0.35">70</text>
<rect x="1213.3" y="476.5" width="62.5" height="98" fill="#bfbfbf"/>
<rect x="1213.3" y="476.5" width="62.5" height="49" fill="#bbbcb9" shape-rendering="crispEdges"/>
<rect x="1213.3" y="476.5" width="62.5" height="98" fill="none" stroke="#f0f0f0" stroke-width="1.3"/>
<text x="1244.6" y="589.5" font-size="12.5" fill="#f0f0f0" text-anchor="middle" stroke="#f0f0f0" stroke-width="0.35">75</text>
<rect x="1286.9" y="476.5" width="62.5" height="98" fill="#cccccc"/>
<rect x="1286.9" y="476.5" width="62.5" height="49" fill="#c8c9c6" shape-rendering="crispEdges"/>
<rect x="1286.9" y="476.5" width="62.5" height="98" fill="none" stroke="#f0f0f0" stroke-width="1.3"/>
<text x="1318.2" y="589.5" font-size="12.5" fill="#f0f0f0" text-anchor="middle" stroke="#f0f0f0" stroke-width="0.35">80</text>
<rect x="1360.5" y="476.5" width="62.5" height="98" fill="#d9d9d9"/>
<rect x="1360.5" y="476.5" width="62.5" height="49" fill="#d5d6d3" shape-rendering="crispEdges"/>
<rect x="1360.5" y="476.5" width="62.5" height="98" fill="none" stroke="#f0f0f0" stroke-width="1.3"/>
<text x="1391.8" y="589.5" font-size="12.5" fill="#f0f0f0" text-anchor="middle" stroke="#f0f0f0" stroke-width="0.35">85</text>
<rect x="1434.2" y="476.5" width="62.5" height="98" fill="#e5e5e5"/>
<rect x="1434.2" y="476.5" width="62.5" height="49" fill="#e1e2df" shape-rendering="crispEdges"/>
<rect x="1434.2" y="476.5" width="62.5" height="98" fill="none" stroke="#f0f0f0" stroke-width="1.3"/>
<text x="1465.4" y="589.5" font-size="12.5" fill="#f0f0f0" text-anchor="middle" stroke="#f0f0f0" stroke-width="0.35">90</text>
<rect x="1507.8" y="476.5" width="62.5" height="98" fill="#f2f2f2"/>
<rect x="1507.8" y="476.5" width="62.5" height="49" fill="#eeefec" shape-rendering="crispEdges"/>
<rect x="1507.8" y="476.5" width="62.5" height="98" fill="none" stroke="#f0f0f0" stroke-width="1.3"/>
<text x="1539.0" y="589.5" font-size="12.5" fill="#f0f0f0" text-anchor="middle" stroke="#f0f0f0" stroke-width="0.35">95</text>
<rect x="1581.4" y="476.5" width="62.5" height="98" fill="#ffffff"/>
<rect x="1581.4" y="476.5" width="62.5" height="49" fill="#fefffe" shape-rendering="crispEdges"/>
<rect x="1581.4" y="476.5" width="62.5" height="98" fill="none" stroke="#f0f0f0" stroke-width="1.3"/>
<text x="1612.7" y="589.5" font-size="12.5" fill="#f0f0f0" text-anchor="middle" stroke="#f0f0f0" stroke-width="0.35">100</text>
<text x="15.89" y="662.00" font-size="28" fill="#f2f2f2" textLength="221.76" lengthAdjust="spacingAndGlyphs">Current Reading</text>
<text x="16.54" y="702.10" font-size="23.5" fill="#f2f2f2" textLength="89.28" lengthAdjust="spacingAndGlyphs">x: 0,311</text>
<text x="166.37" y="702.10" font-size="23.5" fill="#f2f2f2" textLength="104.07" lengthAdjust="spacingAndGlyphs">y: 0,3314</text>
<text x="15.10" y="735.00" font-size="23.5" fill="#f2f2f2" textLength="113.84" lengthAdjust="spacingAndGlyphs">u': 0,1957</text>
<text x="167.17" y="735.00" font-size="23.5" fill="#f2f2f2" textLength="109.19" lengthAdjust="spacingAndGlyphs">v': 0,4694</text>
<text x="15.75" y="767.70" font-size="23.5" fill="#f2f2f2" textLength="189.17" lengthAdjust="spacingAndGlyphs">cd/m²: 398,6881</text>
<text x="16.07" y="800.50" font-size="23.5" fill="#f2f2f2" textLength="154.80" lengthAdjust="spacingAndGlyphs">ΔE 2000: 3,03</text>
<rect x="360.3" y="633.1" width="252.3" height="161.4" fill="none" stroke="#a0a0a0" stroke-width="1"/>
<linearGradient id="cg0"><stop offset="0" stop-color="#81f6c1"/><stop offset="0.5" stop-color="#d9ffc9"/><stop offset="1" stop-color="#ffdfa8"/></linearGradient>
<rect x="360.8" y="633.60" width="251.8" height="3.97" fill="url(#cg0)" shape-rendering="crispEdges"/>
<linearGradient id="cg1"><stop offset="0" stop-color="#82f6c3"/><stop offset="0.5" stop-color="#daffcb"/><stop offset="1" stop-color="#ffdea9"/></linearGradient>
<rect x="360.8" y="636.57" width="251.8" height="3.97" fill="url(#cg1)" shape-rendering="crispEdges"/>
<linearGradient id="cg2"><stop offset="0" stop-color="#83f7c5"/><stop offset="0.5" stop-color="#dcffcd"/><stop offset="1" stop-color="#ffddaa"/></linearGradient>
<rect x="360.8" y="639.54" width="251.8" height="3.97" fill="url(#cg2)" shape-rendering="crispEdges"/>
<linearGradient id="cg3"><stop offset="0" stop-color="#84f7c7"/><stop offset="0.5" stop-color="#ddffcf"/><stop offset="1" stop-color="#ffdcab"/></linearGradient>
<rect x="360.8" y="642.51" width="251.8" height="3.97" fill="url(#cg3)" shape-rendering="crispEdges"/>
<linearGradient id="cg4"><stop offset="0" stop-color="#85f8c9"/><stop offset="0.5" stop-color="#deffd1"/><stop offset="1" stop-color="#ffdbab"/></linearGradient>
<rect x="360.8" y="645.48" width="251.8" height="3.97" fill="url(#cg4)" shape-rendering="crispEdges"/>
<linearGradient id="cg5"><stop offset="0" stop-color="#86f8cb"/><stop offset="0.5" stop-color="#e0ffd3"/><stop offset="1" stop-color="#ffdaac"/></linearGradient>
<rect x="360.8" y="648.45" width="251.8" height="3.97" fill="url(#cg5)" shape-rendering="crispEdges"/>
<linearGradient id="cg6"><stop offset="0" stop-color="#87f8cd"/><stop offset="0.5" stop-color="#e1ffd5"/><stop offset="1" stop-color="#ffd9ad"/></linearGradient>
<rect x="360.8" y="651.42" width="251.8" height="3.97" fill="url(#cg6)" shape-rendering="crispEdges"/>
<linearGradient id="cg7"><stop offset="0" stop-color="#88f8ce"/><stop offset="0.5" stop-color="#e3ffd7"/><stop offset="1" stop-color="#ffd8ae"/></linearGradient>
<rect x="360.8" y="654.39" width="251.8" height="3.97" fill="url(#cg7)" shape-rendering="crispEdges"/>
<linearGradient id="cg8"><stop offset="0" stop-color="#89f9d0"/><stop offset="0.5" stop-color="#e4ffd9"/><stop offset="1" stop-color="#ffd7ae"/></linearGradient>
<rect x="360.8" y="657.36" width="251.8" height="3.97" fill="url(#cg8)" shape-rendering="crispEdges"/>
<linearGradient id="cg9"><stop offset="0" stop-color="#8af9d2"/><stop offset="0.5" stop-color="#e6ffdb"/><stop offset="1" stop-color="#ffd6af"/></linearGradient>
<rect x="360.8" y="660.33" width="251.8" height="3.97" fill="url(#cg9)" shape-rendering="crispEdges"/>
<linearGradient id="cg10"><stop offset="0" stop-color="#8bfad4"/><stop offset="0.5" stop-color="#e7ffdd"/><stop offset="1" stop-color="#ffd5b0"/></linearGradient>
<rect x="360.8" y="663.30" width="251.8" height="3.97" fill="url(#cg10)" shape-rendering="crispEdges"/>
<linearGradient id="cg11"><stop offset="0" stop-color="#8cfad6"/><stop offset="0.5" stop-color="#e9ffdf"/><stop offset="1" stop-color="#ffd4b1"/></linearGradient>
<rect x="360.8" y="666.27" width="251.8" height="3.97" fill="url(#cg11)" shape-rendering="crispEdges"/>
<linearGradient id="cg12"><stop offset="0" stop-color="#8dfad8"/><stop offset="0.5" stop-color="#eaffe1"/><stop offset="1" stop-color="#ffd3b1"/></linearGradient>
<rect x="360.8" y="669.24" width="251.8" height="3.97" fill="url(#cg12)" shape-rendering="crispEdges"/>
<linearGradient id="cg13"><stop offset="0" stop-color="#8efada"/><stop offset="0.5" stop-color="#ecffe4"/><stop offset="1" stop-color="#ffd2b2"/></linearGradient>
<rect x="360.8" y="672.21" width="251.8" height="3.97" fill="url(#cg13)" shape-rendering="crispEdges"/>
<linearGradient id="cg14"><stop offset="0" stop-color="#8ffbdc"/><stop offset="0.5" stop-color="#edffe6"/><stop offset="1" stop-color="#ffd1b3"/></linearGradient>
<rect x="360.8" y="675.19" width="251.8" height="3.97" fill="url(#cg14)" shape-rendering="crispEdges"/>
<linearGradient id="cg15"><stop offset="0" stop-color="#90fbde"/><stop offset="0.5" stop-color="#eeffe8"/><stop offset="1" stop-color="#ffd0b3"/></linearGradient>
<rect x="360.8" y="678.16" width="251.8" height="3.97" fill="url(#cg15)" shape-rendering="crispEdges"/>
<linearGradient id="cg16"><stop offset="0" stop-color="#91fce0"/><stop offset="0.5" stop-color="#f0ffea"/><stop offset="1" stop-color="#ffcfb4"/></linearGradient>
<rect x="360.8" y="681.13" width="251.8" height="3.97" fill="url(#cg16)" shape-rendering="crispEdges"/>
<linearGradient id="cg17"><stop offset="0" stop-color="#92fce2"/><stop offset="0.5" stop-color="#f1ffec"/><stop offset="1" stop-color="#ffceb5"/></linearGradient>
<rect x="360.8" y="684.10" width="251.8" height="3.97" fill="url(#cg17)" shape-rendering="crispEdges"/>
<linearGradient id="cg18"><stop offset="0" stop-color="#93fce4"/><stop offset="0.5" stop-color="#f3ffee"/><stop offset="1" stop-color="#ffcdb6"/></linearGradient>
<rect x="360.8" y="687.07" width="251.8" height="3.97" fill="url(#cg18)" shape-rendering="crispEdges"/>
<linearGradient id="cg19"><stop offset="0" stop-color="#94fce6"/><stop offset="0.5" stop-color="#f4fff0"/><stop offset="1" stop-color="#ffccb6"/></linearGradient>
<rect x="360.8" y="690.04" width="251.8" height="3.97" fill="url(#cg19)" shape-rendering="crispEdges"/>
<linearGradient id="cg20"><stop offset="0" stop-color="#95fde7"/><stop offset="0.5" stop-color="#f6fff2"/><stop offset="1" stop-color="#ffcbb7"/></linearGradient>
<rect x="360.8" y="693.01" width="251.8" height="3.97" fill="url(#cg20)" shape-rendering="crispEdges"/>
<linearGradient id="cg21"><stop offset="0" stop-color="#96fde9"/><stop offset="0.5" stop-color="#f7fff4"/><stop offset="1" stop-color="#ffcab8"/></linearGradient>
<rect x="360.8" y="695.98" width="251.8" height="3.97" fill="url(#cg21)" shape-rendering="crispEdges"/>
<linearGradient id="cg22"><stop offset="0" stop-color="#97feeb"/><stop offset="0.5" stop-color="#f8fff6"/><stop offset="1" stop-color="#ffc9b9"/></linearGradient>
<rect x="360.8" y="698.95" width="251.8" height="3.97" fill="url(#cg22)" shape-rendering="crispEdges"/>
<linearGradient id="cg23"><stop offset="0" stop-color="#98feed"/><stop offset="0.5" stop-color="#fafff8"/><stop offset="1" stop-color="#ffc8b9"/></linearGradient>
<rect x="360.8" y="701.92" width="251.8" height="3.97" fill="url(#cg23)" shape-rendering="crispEdges"/>
<linearGradient id="cg24"><stop offset="0" stop-color="#99feef"/><stop offset="0.5" stop-color="#fbfffa"/><stop offset="1" stop-color="#ffc7ba"/></linearGradient>
<rect x="360.8" y="704.89" width="251.8" height="3.97" fill="url(#cg24)" shape-rendering="crispEdges"/>
<linearGradient id="cg25"><stop offset="0" stop-color="#9afef1"/><stop offset="0.5" stop-color="#fdfffc"/><stop offset="1" stop-color="#ffc6bb"/></linearGradient>
<rect x="360.8" y="707.86" width="251.8" height="3.97" fill="url(#cg25)" shape-rendering="crispEdges"/>
<linearGradient id="cg26"><stop offset="0" stop-color="#9bfff3"/><stop offset="0.5" stop-color="#fefffe"/><stop offset="1" stop-color="#ffc5bc"/></linearGradient>
<rect x="360.8" y="710.83" width="251.8" height="3.97" fill="url(#cg26)" shape-rendering="crispEdges"/>
<linearGradient id="cg27"><stop offset="0" stop-color="#9cfef4"/><stop offset="0.5" stop-color="#fffeff"/><stop offset="1" stop-color="#ffc3bc"/></linearGradient>
<rect x="360.8" y="713.80" width="251.8" height="3.97" fill="url(#cg27)" shape-rendering="crispEdges"/>
<linearGradient id="cg28"><stop offset="0" stop-color="#9dfcf5"/><stop offset="0.5" stop-color="#fefcff"/><stop offset="1" stop-color="#ffc1bc"/></linearGradient>
<rect x="360.8" y="716.77" width="251.8" height="3.97" fill="url(#cg28)" shape-rendering="crispEdges"/>
<linearGradient id="cg29"><stop offset="0" stop-color="#9dfaf5"/><stop offset="0.5" stop-color="#fefaff"/><stop offset="1" stop-color="#ffbfbb"/></linearGradient>
<rect x="360.8" y="719.74" width="251.8" height="3.97" fill="url(#cg29)" shape-rendering="crispEdges"/>
<linearGradient id="cg30"><stop offset="0" stop-color="#9ef7f5"/><stop offset="0.5" stop-color="#fef7ff"/><stop offset="1" stop-color="#ffbdbb"/></linearGradient>
<rect x="360.8" y="722.71" width="251.8" height="3.97" fill="url(#cg30)" shape-rendering="crispEdges"/>
<linearGradient id="cg31"><stop offset="0" stop-color="#9ef5f6"/><stop offset="0.5" stop-color="#fdf5ff"/><stop offset="1" stop-color="#ffbbbb"/></linearGradient>
<rect x="360.8" y="725.68" width="251.8" height="3.97" fill="url(#cg31)" shape-rendering="crispEdges"/>
<linearGradient id="cg32"><stop offset="0" stop-color="#9ef3f6"/><stop offset="0.5" stop-color="#fdf3ff"/><stop offset="1" stop-color="#ffb9ba"/></linearGradient>
<rect x="360.8" y="728.65" width="251.8" height="3.97" fill="url(#cg32)" shape-rendering="crispEdges"/>
<linearGradient id="cg33"><stop offset="0" stop-color="#9ff1f7"/><stop offset="0.5" stop-color="#fcf1ff"/><stop offset="1" stop-color="#ffb7ba"/></linearGradient>
<rect x="360.8" y="731.62" width="251.8" height="3.97" fill="url(#cg33)" shape-rendering="crispEdges"/>
<linearGradient id="cg34"><stop offset="0" stop-color="#9feff7"/><stop offset="0.5" stop-color="#fcefff"/><stop offset="1" stop-color="#ffb6ba"/></linearGradient>
<rect x="360.8" y="734.59" width="251.8" height="3.97" fill="url(#cg34)" shape-rendering="crispEdges"/>
<linearGradient id="cg35"><stop offset="0" stop-color="#a0ecf7"/><stop offset="0.5" stop-color="#fcecff"/><stop offset="1" stop-color="#ffb4b9"/></linearGradient>
<rect x="360.8" y="737.56" width="251.8" height="3.97" fill="url(#cg35)" shape-rendering="crispEdges"/>
<linearGradient id="cg36"><stop offset="0" stop-color="#a0eaf8"/><stop offset="0.5" stop-color="#fbeaff"/><stop offset="1" stop-color="#ffb2b9"/></linearGradient>
<rect x="360.8" y="740.53" width="251.8" height="3.97" fill="url(#cg36)" shape-rendering="crispEdges"/>
<linearGradient id="cg37"><stop offset="0" stop-color="#a1e8f8"/><stop offset="0.5" stop-color="#fbe8ff"/><stop offset="1" stop-color="#ffb0b9"/></linearGradient>
<rect x="360.8" y="743.50" width="251.8" height="3.97" fill="url(#cg37)" shape-rendering="crispEdges"/>
<linearGradient id="cg38"><stop offset="0" stop-color="#a1e6f9"/><stop offset="0.5" stop-color="#fae6ff"/><stop offset="1" stop-color="#ffaeb9"/></linearGradient>
<rect x="360.8" y="746.47" width="251.8" height="3.97" fill="url(#cg38)" shape-rendering="crispEdges"/>
<linearGradient id="cg39"><stop offset="0" stop-color="#a2e4f9"/><stop offset="0.5" stop-color="#fae4ff"/><stop offset="1" stop-color="#ffacb8"/></linearGradient>
<rect x="360.8" y="749.44" width="251.8" height="3.97" fill="url(#cg39)" shape-rendering="crispEdges"/>
<linearGradient id="cg40"><stop offset="0" stop-color="#a2e2fa"/><stop offset="0.5" stop-color="#fae2ff"/><stop offset="1" stop-color="#ffaab8"/></linearGradient>
<rect x="360.8" y="752.41" width="251.8" height="3.97" fill="url(#cg40)" shape-rendering="crispEdges"/>
<linearGradient id="cg41"><stop offset="0" stop-color="#a2dffa"/><stop offset="0.5" stop-color="#f9dfff"/><stop offset="1" stop-color="#ffa8b8"/></linearGradient>
<rect x="360.8" y="755.39" width="251.8" height="3.97" fill="url(#cg41)" shape-rendering="crispEdges"/>
<linearGradient id="cg42"><stop offset="0" stop-color="#a3ddfa"/><stop offset="0.5" stop-color="#f9ddff"/><stop offset="1" stop-color="#ffa6b7"/></linearGradient>
<rect x="360.8" y="758.36" width="251.8" height="3.97" fill="url(#cg42)" shape-rendering="crispEdges"/>
<linearGradient id="cg43"><stop offset="0" stop-color="#a3dbfb"/><stop offset="0.5" stop-color="#f8dbff"/><stop offset="1" stop-color="#ffa4b7"/></linearGradient>
<rect x="360.8" y="761.33" width="251.8" height="3.97" fill="url(#cg43)" shape-rendering="crispEdges"/>
<linearGradient id="cg44"><stop offset="0" stop-color="#a4d9fb"/><stop offset="0.5" stop-color="#f8d9ff"/><stop offset="1" stop-color="#ffa2b7"/></linearGradient>
<rect x="360.8" y="764.30" width="251.8" height="3.97" fill="url(#cg44)" shape-rendering="crispEdges"/>
<linearGradient id="cg45"><stop offset="0" stop-color="#a4d7fc"/><stop offset="0.5" stop-color="#f7d7ff"/><stop offset="1" stop-color="#ffa0b7"/></linearGradient>
<rect x="360.8" y="767.27" width="251.8" height="3.97" fill="url(#cg45)" shape-rendering="crispEdges"/>
<linearGradient id="cg46"><stop offset="0" stop-color="#a5d4fc"/><stop offset="0.5" stop-color="#f7d4ff"/><stop offset="1" stop-color="#ff9eb6"/></linearGradient>
<rect x="360.8" y="770.24" width="251.8" height="3.97" fill="url(#cg46)" shape-rendering="crispEdges"/>
<linearGradient id="cg47"><stop offset="0" stop-color="#a5d2fc"/><stop offset="0.5" stop-color="#f7d2ff"/><stop offset="1" stop-color="#ff9db6"/></linearGradient>
<rect x="360.8" y="773.21" width="251.8" height="3.97" fill="url(#cg47)" shape-rendering="crispEdges"/>
<linearGradient id="cg48"><stop offset="0" stop-color="#a6d0fd"/><stop offset="0.5" stop-color="#f6d0ff"/><stop offset="1" stop-color="#ff9bb6"/></linearGradient>
<rect x="360.8" y="776.18" width="251.8" height="3.97" fill="url(#cg48)" shape-rendering="crispEdges"/>
<linearGradient id="cg49"><stop offset="0" stop-color="#a6cefd"/><stop offset="0.5" stop-color="#f6ceff"/><stop offset="1" stop-color="#ff99b5"/></linearGradient>
<rect x="360.8" y="779.15" width="251.8" height="3.97" fill="url(#cg49)" shape-rendering="crispEdges"/>
<linearGradient id="cg50"><stop offset="0" stop-color="#a6ccfe"/><stop offset="0.5" stop-color="#f5ccff"/><stop offset="1" stop-color="#ff97b5"/></linearGradient>
<rect x="360.8" y="782.12" width="251.8" height="3.97" fill="url(#cg50)" shape-rendering="crispEdges"/>
<linearGradient id="cg51"><stop offset="0" stop-color="#a7c9fe"/><stop offset="0.5" stop-color="#f5c9ff"/><stop offset="1" stop-color="#ff95b5"/></linearGradient>
<rect x="360.8" y="785.09" width="251.8" height="3.97" fill="url(#cg51)" shape-rendering="crispEdges"/>
<linearGradient id="cg52"><stop offset="0" stop-color="#a7c7fe"/><stop offset="0.5" stop-color="#f5c7ff"/><stop offset="1" stop-color="#ff93b4"/></linearGradient>
<rect x="360.8" y="788.06" width="251.8" height="3.97" fill="url(#cg52)" shape-rendering="crispEdges"/>
<linearGradient id="cg53"><stop offset="0" stop-color="#a8c5ff"/><stop offset="0.5" stop-color="#f4c5ff"/><stop offset="1" stop-color="#ff91b4"/></linearGradient>
<rect x="360.8" y="791.03" width="251.8" height="3.97" fill="url(#cg53)" shape-rendering="crispEdges"/>
<line x1="371.6" y1="794.0" x2="371.6" y2="799.0" stroke="#c8c8c8" stroke-width="1.3"/>
<text x="371.6" y="815.0" font-size="14" fill="#dcdcdc" text-anchor="middle">0,29</text>
<line x1="421.9" y1="794.0" x2="421.9" y2="799.0" stroke="#c8c8c8" stroke-width="1.3"/>
<text x="421.9" y="815.0" font-size="14" fill="#dcdcdc" text-anchor="middle">0,3</text>
<line x1="472.2" y1="794.0" x2="472.2" y2="799.0" stroke="#c8c8c8" stroke-width="1.3"/>
<text x="472.2" y="815.0" font-size="14" fill="#dcdcdc" text-anchor="middle">0,31</text>
<line x1="522.5" y1="794.0" x2="522.5" y2="799.0" stroke="#c8c8c8" stroke-width="1.3"/>
<text x="522.5" y="815.0" font-size="14" fill="#dcdcdc" text-anchor="middle">0,32</text>
<line x1="572.8" y1="794.0" x2="572.8" y2="799.0" stroke="#c8c8c8" stroke-width="1.3"/>
<text x="572.8" y="815.0" font-size="14" fill="#dcdcdc" text-anchor="middle">0,33</text>
<line x1="355.8" y1="680.0" x2="360.8" y2="680.0" stroke="#c8c8c8" stroke-width="1.3"/>
<text x="354.0" y="685.0" font-size="14" fill="#dcdcdc" text-anchor="end">0,34</text>
<line x1="355.8" y1="744.5" x2="360.8" y2="744.5" stroke="#c8c8c8" stroke-width="1.3"/>
<text x="354.0" y="749.5" font-size="14" fill="#dcdcdc" text-anchor="end">0,32</text>
<text x="431.10" y="628.90" font-size="14.3" fill="#dcdcdc" textLength="75.93" lengthAdjust="spacingAndGlyphs">CIE 1931 xy</text>
<svg x="360.8" y="633.6" width="251.8" height="160.4" viewBox="360.8 633.6 251.8 160.4" overflow="hidden">
<polyline points="385.0,798.9 395.0,792.0 405.1,785.2 415.1,778.4 425.2,771.7 435.2,765.0 445.3,758.4 455.3,751.9 465.3,745.5 475.4,739.1 485.4,732.8 495.5,726.6 505.5,720.4 515.6,714.3 525.6,708.3 535.7,702.4 545.7,696.5 555.7,690.7 565.8,684.9 575.8,679.2 585.9,673.6 595.9,668.1 606.0,662.6 616.0,657.2" fill="none" stroke="#000" stroke-width="2.6"/>
<rect x="478.8" y="705.8" width="13.2" height="13" fill="#fff" stroke="#000" stroke-width="2.4"/>
<circle cx="598.8" cy="714.4" r="4.6" fill="#111" stroke="#000" stroke-width="1"/>
<circle cx="523.9" cy="714.8" r="4.6" fill="#2a2a2a" stroke="#000" stroke-width="1"/>
<circle cx="504.8" cy="711.3" r="4.6" fill="#333" stroke="#000" stroke-width="1"/>
<circle cx="512.0" cy="695.4" r="4.6" fill="#2e2e2e" stroke="#000" stroke-width="1"/>
<circle cx="495.3" cy="694.4" r="4.6" fill="#555" stroke="#000" stroke-width="1"/>
<circle cx="501.3" cy="693.9" r="4.6" fill="#777" stroke="#000" stroke-width="1"/>
<circle cx="499.3" cy="698.9" r="4.6" fill="#999" stroke="#000" stroke-width="1"/>
<circle cx="490.0" cy="699.9" r="4.6" fill="#6a6a6a" stroke="#000" stroke-width="1"/>
<circle cx="491.0" cy="703.9" r="4.6" fill="#bbb" stroke="#000" stroke-width="1"/>
<circle cx="488.4" cy="704.2" r="4.6" fill="#d4d4d4" stroke="#000" stroke-width="1"/>
<circle cx="484.4" cy="704.4" r="4.6" fill="#e8e8e8" stroke="#000" stroke-width="1"/>
<circle cx="477.7" cy="704.6" r="4.6" fill="#fdfdfd" stroke="#000" stroke-width="1"/>
</svg>
<rect x="624" y="606" width="1031" height="13.6" fill="#2e2e2e"/>
<rect x="624" y="619.6" width="1031" height="13.2" fill="#161616"/>
<rect x="624" y="606" width="13" height="26.8" fill="#000"/>
<text x="771.8" y="624.6" font-size="14.3" fill="#f4f4f4" text-anchor="start" stroke="#f4f4f4" stroke-width="0.25">0</text>
<text x="855.2" y="624.6" font-size="14.3" fill="#f4f4f4" text-anchor="start" stroke="#f4f4f4" stroke-width="0.25">5</text>
<text x="938.6" y="624.6" font-size="14.3" fill="#f4f4f4" text-anchor="start" stroke="#f4f4f4" stroke-width="0.25">10</text>
<text x="1022.0" y="624.6" font-size="14.3" fill="#f4f4f4" text-anchor="start" stroke="#f4f4f4" stroke-width="0.25">15</text>
<text x="1105.4" y="624.6" font-size="14.3" fill="#f4f4f4" text-anchor="start" stroke="#f4f4f4" stroke-width="0.25">20</text>
<text x="1188.8" y="624.6" font-size="14.3" fill="#f4f4f4" text-anchor="start" stroke="#f4f4f4" stroke-width="0.25">25</text>
<text x="1272.2" y="624.6" font-size="14.3" fill="#f4f4f4" text-anchor="start" stroke="#f4f4f4" stroke-width="0.25">30</text>
<text x="1355.6" y="624.6" font-size="14.3" fill="#f4f4f4" text-anchor="start" stroke="#f4f4f4" stroke-width="0.25">35</text>
<text x="1439.0" y="624.6" font-size="14.3" fill="#f4f4f4" text-anchor="start" stroke="#f4f4f4" stroke-width="0.25">40</text>
<text x="1522.4" y="624.6" font-size="14.3" fill="#f4f4f4" text-anchor="start" stroke="#f4f4f4" stroke-width="0.25">45</text>
<text x="1605.8" y="624.6" font-size="14.3" fill="#f4f4f4" text-anchor="start" stroke="#f4f4f4" stroke-width="0.25">50</text>
<rect x="637" y="632.8" width="1018" height="25.1" fill="#444444"/>
<rect x="624" y="632.8" width="13" height="25.1" fill="#262626"/>
<text x="641.46" y="651.80" font-size="14.8" fill="#f0f0f0" textLength="54.18" lengthAdjust="spacingAndGlyphs">x: CIE31</text>
<text x="771.3" y="651.8" font-size="15.5" fill="#f0f0f0" text-anchor="start">0,3837</text>
<text x="854.7" y="651.8" font-size="15.5" fill="#f0f0f0" text-anchor="start">0,3351</text>
<text x="938.1" y="651.8" font-size="15.5" fill="#f0f0f0" text-anchor="start">0,3203</text>
<text x="1021.5" y="651.8" font-size="15.5" fill="#f0f0f0" text-anchor="start">0,3179</text>
<text x="1104.9" y="651.8" font-size="15.5" fill="#f0f0f0" text-anchor="start">0,3165</text>
<text x="1188.3" y="651.8" font-size="15.5" fill="#f0f0f0" text-anchor="start">0,3151</text>
<text x="1271.7" y="651.8" font-size="15.5" fill="#f0f0f0" text-anchor="start">0,3151</text>
<text x="1355.1" y="651.8" font-size="15.5" fill="#f0f0f0" text-anchor="start">0,3148</text>
<text x="1438.5" y="651.8" font-size="15.5" fill="#f0f0f0" text-anchor="start">0,3135</text>
<text x="1521.9" y="651.8" font-size="15.5" fill="#f0f0f0" text-anchor="start">0,3134</text>
<text x="1605.3" y="651.8" font-size="15.5" fill="#f0f0f0" text-anchor="start">0,3134</text>
<rect x="637" y="657.7" width="1018" height="25.1" fill="#7e7e7e"/>
<rect x="624" y="657.7" width="13" height="25.1" fill="#2c2c2c"/>
<text x="641.53" y="676.70" font-size="14.8" fill="#f0f0f0" textLength="54.11" lengthAdjust="spacingAndGlyphs">y: CIE31</text>
<text x="771.3" y="676.7" font-size="15.5" fill="#f0f0f0" text-anchor="start">0,3264</text>
<text x="854.7" y="676.7" font-size="15.5" fill="#f0f0f0" text-anchor="start">0,3287</text>
<text x="938.1" y="676.7" font-size="15.5" fill="#f0f0f0" text-anchor="start">0,3288</text>
<text x="1021.5" y="676.7" font-size="15.5" fill="#f0f0f0" text-anchor="start">0,3344</text>
<text x="1104.9" y="676.7" font-size="15.5" fill="#f0f0f0" text-anchor="start">0,3297</text>
<text x="1188.3" y="676.7" font-size="15.5" fill="#f0f0f0" text-anchor="start">0,3334</text>
<text x="1271.7" y="676.7" font-size="15.5" fill="#f0f0f0" text-anchor="start">0,3338</text>
<text x="1355.1" y="676.7" font-size="15.5" fill="#f0f0f0" text-anchor="start">0,3349</text>
<text x="1438.5" y="676.7" font-size="15.5" fill="#f0f0f0" text-anchor="start">0,3326</text>
<text x="1521.9" y="676.7" font-size="15.5" fill="#f0f0f0" text-anchor="start">0,3315</text>
<text x="1605.3" y="676.7" font-size="15.5" fill="#f0f0f0" text-anchor="start">0,3325</text>
<rect x="637" y="682.6" width="1018" height="25.1" fill="#444444"/>
<rect x="624" y="682.6" width="13" height="25.1" fill="#262626"/>
<text x="641.24" y="701.60" font-size="14.8" fill="#f0f0f0" textLength="9.68" lengthAdjust="spacingAndGlyphs">Y</text>
<text x="771.3" y="701.6" font-size="15.5" fill="#f0f0f0" text-anchor="start">0,3208</text>
<text x="854.7" y="701.6" font-size="15.5" fill="#f0f0f0" text-anchor="start">0,8247</text>
<text x="938.1" y="701.6" font-size="15.5" fill="#f0f0f0" text-anchor="start">3,1966</text>
<text x="1021.5" y="701.6" font-size="15.5" fill="#f0f0f0" text-anchor="start">6,8633</text>
<text x="1104.9" y="701.6" font-size="15.5" fill="#f0f0f0" text-anchor="start">12,8171</text>
<text x="1188.3" y="701.6" font-size="15.5" fill="#f0f0f0" text-anchor="start">20,7073</text>
<text x="1271.7" y="701.6" font-size="15.5" fill="#f0f0f0" text-anchor="start">29,8006</text>
<text x="1355.1" y="701.6" font-size="15.5" fill="#f0f0f0" text-anchor="start">40,9070</text>
<text x="1438.5" y="701.6" font-size="15.5" fill="#f0f0f0" text-anchor="start">52,6679</text>
<text x="1521.9" y="701.6" font-size="15.5" fill="#f0f0f0" text-anchor="start">65,9401</text>
<text x="1605.3" y="701.6" font-size="15.5" fill="#f0f0f0" text-anchor="start">82,4640</text>
<rect x="637" y="707.5" width="1018" height="25.1" fill="#7e7e7e"/>
<rect x="624" y="707.5" width="13" height="25.1" fill="#2c2c2c"/>
<text x="641.29" y="726.50" font-size="14.8" fill="#f0f0f0" textLength="57.94" lengthAdjust="spacingAndGlyphs">Target Y</text>
<text x="771.3" y="726.5" font-size="15.5" fill="#f0f0f0" text-anchor="start">0,0000</text>
<text x="854.7" y="726.5" font-size="15.5" fill="#f0f0f0" text-anchor="start">1,6046</text>
<text x="938.1" y="726.5" font-size="15.5" fill="#f0f0f0" text-anchor="start">4,1184</text>
<text x="1021.5" y="726.5" font-size="15.5" fill="#f0f0f0" text-anchor="start">7,7275</text>
<text x="1104.9" y="726.5" font-size="15.5" fill="#f0f0f0" text-anchor="start">13,1985</text>
<text x="1188.3" y="726.5" font-size="15.5" fill="#f0f0f0" text-anchor="start">20,4405</text>
<text x="1271.7" y="726.5" font-size="15.5" fill="#f0f0f0" text-anchor="start">28,8139</text>
<text x="1355.1" y="726.5" font-size="15.5" fill="#f0f0f0" text-anchor="start">39,8284</text>
<text x="1438.5" y="726.5" font-size="15.5" fill="#f0f0f0" text-anchor="start">52,9730</text>
<text x="1521.9" y="726.5" font-size="15.5" fill="#f0f0f0" text-anchor="start">68,3515</text>
<text x="1605.3" y="726.5" font-size="15.5" fill="#f0f0f0" text-anchor="start">86,0610</text>
<rect x="637" y="732.4" width="1018" height="25.1" fill="#444444"/>
<rect x="624" y="732.4" width="13" height="25.1" fill="#262626"/>
<text x="640.78" y="751.40" font-size="14.8" fill="#f0f0f0" textLength="121.86" lengthAdjust="spacingAndGlyphs">Gamma Log/Log</text>
<text x="771.3" y="751.4" font-size="15.5" fill="#f0f0f0" text-anchor="start">1,2778</text>
<text x="854.7" y="751.4" font-size="15.5" fill="#f0f0f0" text-anchor="start">2,0767</text>
<text x="938.1" y="751.4" font-size="15.5" fill="#f0f0f0" text-anchor="start">2,1138</text>
<text x="1021.5" y="751.4" font-size="15.5" fill="#f0f0f0" text-anchor="start">2,1338</text>
<text x="1104.9" y="751.4" font-size="15.5" fill="#f0f0f0" text-anchor="start">2,1358</text>
<text x="1188.3" y="751.4" font-size="15.5" fill="#f0f0f0" text-anchor="start">2,1396</text>
<text x="1271.7" y="751.4" font-size="15.5" fill="#f0f0f0" text-anchor="start">2,1426</text>
<text x="1355.1" y="751.4" font-size="15.5" fill="#f0f0f0" text-anchor="start">2,1630</text>
<text x="1438.5" y="751.4" font-size="15.5" fill="#f0f0f0" text-anchor="start">2,2091</text>
<text x="1521.9" y="751.4" font-size="15.5" fill="#f0f0f0" text-anchor="start">2,2597</text>
<text x="1605.3" y="751.4" font-size="15.5" fill="#f0f0f0" text-anchor="start">2,2863</text>
<rect x="637" y="757.3" width="1018" height="25.1" fill="#7e7e7e"/>
<rect x="624" y="757.3" width="13" height="25.1" fill="#2c2c2c"/>
<text x="640.91" y="776.30" font-size="14.8" fill="#f0f0f0" textLength="28.47" lengthAdjust="spacingAndGlyphs">CCT</text>
<text x="771.3" y="776.3" font-size="15.5" fill="#f0f0f0" text-anchor="start">3471,0000</text>
<text x="854.7" y="776.3" font-size="15.5" fill="#f0f0f0" text-anchor="start">5368,0000</text>
<text x="938.1" y="776.3" font-size="15.5" fill="#f0f0f0" text-anchor="start">6100,0000</text>
<text x="1021.5" y="776.3" font-size="15.5" fill="#f0f0f0" text-anchor="start">6199,0000</text>
<text x="1104.9" y="776.3" font-size="15.5" fill="#f0f0f0" text-anchor="start">6296,0000</text>
<text x="1188.3" y="776.3" font-size="15.5" fill="#f0f0f0" text-anchor="start">6346,0000</text>
<text x="1271.7" y="776.3" font-size="15.5" fill="#f0f0f0" text-anchor="start">6343,0000</text>
<text x="1355.1" y="776.3" font-size="15.5" fill="#f0f0f0" text-anchor="start">6355,0000</text>
<text x="1438.5" y="776.3" font-size="15.5" fill="#f0f0f0" text-anchor="start">6434,0000</text>
<text x="1521.9" y="776.3" font-size="15.5" fill="#f0f0f0" text-anchor="start">6447,0000</text>
<text x="1605.3" y="776.3" font-size="15.5" fill="#f0f0f0" text-anchor="start">6443,0000</text>
<rect x="637" y="782.2" width="1018" height="25.1" fill="#444444"/>
<rect x="624" y="782.2" width="13" height="25.1" fill="#262626"/>
<text x="641.14" y="801.20" font-size="14.8" fill="#f0f0f0" textLength="59.04" lengthAdjust="spacingAndGlyphs">ΔE 2000</text>
<text x="771.3" y="801.2" font-size="15.5" fill="#f0f0f0" text-anchor="start">1,1836</text>
<text x="854.7" y="801.2" font-size="15.5" fill="#f0f0f0" text-anchor="start">1,3606</text>
<text x="938.1" y="801.2" font-size="15.5" fill="#f0f0f0" text-anchor="start">1,7068</text>
<text x="1021.5" y="801.2" font-size="15.5" fill="#f0f0f0" text-anchor="start">1,1088</text>
<text x="1104.9" y="801.2" font-size="15.5" fill="#f0f0f0" text-anchor="start">0,8598</text>
<text x="1188.3" y="801.2" font-size="15.5" fill="#f0f0f0" text-anchor="start">0,9463</text>
<text x="1271.7" y="801.2" font-size="15.5" fill="#f0f0f0" text-anchor="start">1,2613</text>
<text x="1355.1" y="801.2" font-size="15.5" fill="#f0f0f0" text-anchor="start">1,7810</text>
<text x="1438.5" y="801.2" font-size="15.5" fill="#f0f0f0" text-anchor="start">1,2598</text>
<text x="1521.9" y="801.2" font-size="15.5" fill="#f0f0f0" text-anchor="start">1,1919</text>
<text x="1605.3" y="801.2" font-size="15.5" fill="#f0f0f0" text-anchor="start">1,7337</text>
<rect x="637" y="807.6" width="1018" height="16" fill="#606060"/>
<rect x="656" y="809.3" width="508" height="13" rx="6.5" fill="#494949"/>
<rect x="638.5" y="809" width="14" height="13.5" rx="2" fill="#777"/>
<path d="M642 815.7 L648 811.7 V819.7 Z" fill="#333"/>
<rect x="1641" y="809" width="14" height="13.5" rx="2" fill="#777"/>
<path d="M1651 815.7 L1645 811.7 V819.7 Z" fill="#333"/>
<rect x="0" y="825" width="1655" height="80" fill="#333"/>
<rect x="-40.5" y="828.6" width="63" height="61" rx="5" fill="url(#patg)"/>
<rect x="-34.0" y="834.8" width="50" height="30" rx="5" fill="#000000"/>
<rect x="-32.6" y="836.2" width="48.6" height="28.6" rx="4.5" fill="#0c0c0c"/>
<text x="-9.0" y="883.6" font-size="13" fill="#262626" text-anchor="middle" font-weight="bold">5</text>
<rect x="24.5" y="828.6" width="63" height="61" rx="5" fill="url(#patg)"/>
<rect x="31.0" y="834.8" width="50" height="30" rx="5" fill="#000000"/>
<rect x="32.4" y="836.2" width="48.6" height="28.6" rx="4.5" fill="#1a1a1a"/>
<text x="56.0" y="883.6" font-size="13" fill="#262626" text-anchor="middle" font-weight="bold">10</text>
<rect x="89.5" y="828.6" width="63" height="61" rx="5" fill="url(#patg)"/>
<rect x="96.0" y="834.8" width="50" height="30" rx="5" fill="#000000"/>
<rect x="97.4" y="836.2" width="48.6" height="28.6" rx="4.5" fill="#262626"/>
<text x="121.0" y="883.6" font-size="13" fill="#262626" text-anchor="middle" font-weight="bold">15</text>
<rect x="154.5" y="828.6" width="63" height="61" rx="5" fill="url(#patg)"/>
<rect x="161.0" y="834.8" width="50" height="30" rx="5" fill="#0b0b0b"/>
<rect x="162.4" y="836.2" width="48.6" height="28.6" rx="4.5" fill="#333333"/>
<text x="186.0" y="883.6" font-size="13" fill="#262626" text-anchor="middle" font-weight="bold">20</text>
<rect x="219.5" y="828.6" width="63" height="61" rx="5" fill="url(#patg)"/>
<rect x="226.0" y="834.8" width="50" height="30" rx="5" fill="#181818"/>
<rect x="227.4" y="836.2" width="48.6" height="28.6" rx="4.5" fill="#404040"/>
<text x="251.0" y="883.6" font-size="13" fill="#262626" text-anchor="middle" font-weight="bold">25</text>
<rect x="284.5" y="828.6" width="63" height="61" rx="5" fill="url(#patg)"/>
<rect x="291.0" y="834.8" width="50" height="30" rx="5" fill="#242424"/>
<rect x="292.4" y="836.2" width="48.6" height="28.6" rx="4.5" fill="#4c4c4c"/>
<text x="316.0" y="883.6" font-size="13" fill="#262626" text-anchor="middle" font-weight="bold">30</text>
<rect x="349.5" y="828.6" width="63" height="61" rx="5" fill="url(#patg)"/>
<rect x="356.0" y="834.8" width="50" height="30" rx="5" fill="#313131"/>
<rect x="357.4" y="836.2" width="48.6" height="28.6" rx="4.5" fill="#595959"/>
<text x="381.0" y="883.6" font-size="13" fill="#262626" text-anchor="middle" font-weight="bold">35</text>
<rect x="414.5" y="828.6" width="63" height="61" rx="5" fill="url(#patg)"/>
<rect x="421.0" y="834.8" width="50" height="30" rx="5" fill="#3e3e3e"/>
<rect x="422.4" y="836.2" width="48.6" height="28.6" rx="4.5" fill="#666666"/>
<text x="446.0" y="883.6" font-size="13" fill="#262626" text-anchor="middle" font-weight="bold">40</text>
<rect x="479.5" y="828.6" width="63" height="61" rx="5" fill="url(#patg)"/>
<rect x="486.0" y="834.8" width="50" height="30" rx="5" fill="#4b4b4b"/>
<rect x="487.4" y="836.2" width="48.6" height="28.6" rx="4.5" fill="#737373"/>
<text x="511.0" y="883.6" font-size="13" fill="#262626" text-anchor="middle" font-weight="bold">45</text>
<rect x="544.5" y="828.6" width="63" height="61" rx="5" fill="url(#patg)"/>
<rect x="551.0" y="834.8" width="50" height="30" rx="5" fill="#575757"/>
<rect x="552.4" y="836.2" width="48.6" height="28.6" rx="4.5" fill="#7f7f7f"/>
<text x="576.0" y="883.6" font-size="13" fill="#262626" text-anchor="middle" font-weight="bold">50</text>
<rect x="609.5" y="828.6" width="63" height="61" rx="5" fill="url(#patg)"/>
<rect x="616.0" y="834.8" width="50" height="30" rx="5" fill="#646464"/>
<rect x="617.4" y="836.2" width="48.6" height="28.6" rx="4.5" fill="#8c8c8c"/>
<text x="641.0" y="883.6" font-size="13" fill="#262626" text-anchor="middle" font-weight="bold">55</text>
<rect x="674.5" y="828.6" width="63" height="61" rx="5" fill="url(#patg)"/>
<rect x="681.0" y="834.8" width="50" height="30" rx="5" fill="#717171"/>
<rect x="682.4" y="836.2" width="48.6" height="28.6" rx="4.5" fill="#999999"/>
<text x="706.0" y="883.6" font-size="13" fill="#262626" text-anchor="middle" font-weight="bold">60</text>
<rect x="739.5" y="828.6" width="63" height="61" rx="5" fill="url(#patg)"/>
<rect x="746.0" y="834.8" width="50" height="30" rx="5" fill="#7e7e7e"/>
<rect x="747.4" y="836.2" width="48.6" height="28.6" rx="4.5" fill="#a6a6a6"/>
<text x="771.0" y="883.6" font-size="13" fill="#262626" text-anchor="middle" font-weight="bold">65</text>
<rect x="804.5" y="828.6" width="63" height="61" rx="5" fill="url(#patg)"/>
<rect x="811.0" y="834.8" width="50" height="30" rx="5" fill="#8a8a8a"/>
<rect x="812.4" y="836.2" width="48.6" height="28.6" rx="4.5" fill="#b2b2b2"/>
<text x="836.0" y="883.6" font-size="13" fill="#262626" text-anchor="middle" font-weight="bold">70</text>
<rect x="869.5" y="828.6" width="63" height="61" rx="5" fill="url(#patg)"/>
<rect x="876.0" y="834.8" width="50" height="30" rx="5" fill="#979797"/>
<rect x="877.4" y="836.2" width="48.6" height="28.6" rx="4.5" fill="#bfbfbf"/>
<text x="901.0" y="883.6" font-size="13" fill="#262626" text-anchor="middle" font-weight="bold">75</text>
<rect x="934.5" y="828.6" width="63" height="61" rx="5" fill="url(#patg)"/>
<rect x="941.0" y="834.8" width="50" height="30" rx="5" fill="#a4a4a4"/>
<rect x="942.4" y="836.2" width="48.6" height="28.6" rx="4.5" fill="#cccccc"/>
<text x="966.0" y="883.6" font-size="13" fill="#262626" text-anchor="middle" font-weight="bold">80</text>
<rect x="999.5" y="828.6" width="63" height="61" rx="5" fill="url(#patg)"/>
<rect x="1006.0" y="834.8" width="50" height="30" rx="5" fill="#b1b1b1"/>
<rect x="1007.4" y="836.2" width="48.6" height="28.6" rx="4.5" fill="#d9d9d9"/>
<text x="1031.0" y="883.6" font-size="13" fill="#262626" text-anchor="middle" font-weight="bold">85</text>
<rect x="1064.5" y="828.6" width="63" height="61" rx="5" fill="url(#patg)"/>
<rect x="1071.0" y="834.8" width="50" height="30" rx="5" fill="#bdbdbd"/>
<rect x="1072.4" y="836.2" width="48.6" height="28.6" rx="4.5" fill="#e5e5e5"/>
<text x="1096.0" y="883.6" font-size="13" fill="#262626" text-anchor="middle" font-weight="bold">90</text>
<rect x="1129.5" y="828.6" width="63" height="61" rx="5" fill="url(#patg)"/>
<rect x="1136.0" y="834.8" width="50" height="30" rx="5" fill="#cacaca"/>
<rect x="1137.4" y="836.2" width="48.6" height="28.6" rx="4.5" fill="#f2f2f2"/>
<text x="1161.0" y="883.6" font-size="13" fill="#262626" text-anchor="middle" font-weight="bold">95</text>
<rect x="1194.5" y="828.6" width="63" height="61" rx="5" fill="#252525"/>
<rect x="1201.0" y="834.6" width="50.5" height="30.5" rx="5" fill="#fff" stroke="#ccc" stroke-width="0.8"/>
<text x="1226.0" y="883.6" font-size="13" fill="#f4f4f4" text-anchor="middle" font-weight="bold">100</text>
<rect x="0" y="889.5" width="1261" height="15.5" fill="#5c5c5c"/>
<rect x="104.5" y="891" width="1136" height="12.3" rx="6" fill="#4a4a4a"/>
<rect x="0" y="891" width="9.8" height="13" rx="2" fill="#7a7a7a"/>
<path d="M1.5 897.5 L6.5 893.5 V901.5 Z" fill="#333"/>
<rect x="1246" y="891" width="13" height="13" rx="2" fill="#7a7a7a"/>
<path d="M1255.5 897.5 L1250.5 893.5 V901.5 Z" fill="#333"/>
<rect x="1259" y="825" width="396" height="80" fill="#333"/>
<rect x="1261.2" y="828.7" width="59.8" height="76.3" rx="5" fill="url(#ctlg)"/>
<line x1="1261.2" y1="851.5" x2="1321" y2="851.5" stroke="#444" stroke-width="1.5"/>
<circle cx="1291.3" cy="839.6" r="9" fill="url(#icog)"/>
<path d="M1286 842 L1291.3 837 L1296.6 842 Z" fill="#333"/>
<rect x="1272.5" y="859.5" width="37.5" height="37.5" rx="5" fill="#9a9a9a" stroke="#222" stroke-width="2.5"/>
<rect x="1283" y="870" width="17.5" height="17" fill="#111"/>
<rect x="1321.5" y="827.7" width="334" height="38.5" fill="#222"/>
<rect x="1323.1" y="828" width="56.1" height="38" fill="url(#ctlg)"/>
<circle cx="1351.2" cy="846.5" r="12.5" fill="url(#icog)"/>
<rect x="1380.8" y="828" width="54.7" height="38" fill="url(#ctlg)"/>
<circle cx="1408.2" cy="846.5" r="12.5" fill="url(#icog)"/>
<rect x="1437.1" y="828" width="55.1" height="38" fill="url(#ctlg)"/>
<circle cx="1464.7" cy="846.5" r="12.5" fill="url(#icog)"/>
<rect x="1493.8" y="828" width="54.8" height="38" fill="url(#ctlg)"/>
<circle cx="1521.2" cy="846.5" r="12.5" fill="url(#icog)"/>
<rect x="1550.2" y="828" width="54.4" height="38" fill="url(#ctlg)"/>
<circle cx="1577.4" cy="846.5" r="12.5" fill="url(#icog)"/>
<linearGradient id="dkg" x1="0" y1="0" x2="0" y2="1"><stop offset="0" stop-color="#363636"/><stop offset="1" stop-color="#282828"/></linearGradient>
<linearGradient id="dkc" x1="0" y1="0" x2="0" y2="1"><stop offset="0" stop-color="#242424"/><stop offset="1" stop-color="#393939"/></linearGradient>
<rect x="1606" y="828" width="49" height="38" fill="url(#dkg)"/>
<circle cx="1634.1" cy="847" r="12.3" fill="url(#dkc)"/>
<rect x="1346.4" y="841.5" width="9.5" height="9.5" fill="#333"/>
<path d="M1404.2 840 L1414.2 846.5 L1404.2 853 Z" fill="#333"/>
<path d="M1461.2 840 H1458.7 V853 H1461.2 M1468.2 840 H1470.7 V853 H1468.2" fill="none" stroke="#333" stroke-width="2.4"/>
<path d="M1461.7 846.5 H1467.7" stroke="#333" stroke-width="1.6" stroke-dasharray="1.6 1.4"/>
<ellipse cx="1517.0" cy="846.5" rx="4.3" ry="3.4" fill="none" stroke="#333" stroke-width="2.4"/><ellipse cx="1525.4" cy="846.5" rx="4.3" ry="3.4" fill="none" stroke="#333" stroke-width="2.4"/>
<path d="M1571.4 846 A6 6 0 0 1 1582.4 842 M1583.4 847 A6 6 0 0 1 1572.4 851" fill="none" stroke="#333" stroke-width="2.6"/>
<path d="M1583.4 838.5 L1584.4 844.5 L1578.4 844.5 Z M1571.4 854.5 L1570.4 848.5 L1576.4 848.5 Z" fill="#333"/>
<rect x="1321.5" y="866.2" width="334" height="38.8" fill="#222"/>
<rect x="1322.3" y="867" width="170" height="38" fill="url(#ctlg)"/>
<rect x="1493.8" y="867" width="161.2" height="38" fill="url(#ctlg)"/>
<circle cx="1360" cy="886" r="12" fill="url(#icog)"/>
<path d="M1360.5 881 L1356 886 L1360.5 891 M1365.5 881 L1361 886 L1365.5 891" fill="none" stroke="#3a3a3a" stroke-width="2"/>
<circle cx="1627" cy="886" r="12" fill="url(#icog)"/>
<path d="M1622.5 881 L1627 886 L1622.5 891 M1627.5 881 L1632 886 L1627.5 891" fill="none" stroke="#3a3a3a" stroke-width="2"/>
<text x="1392.65" y="896.00" font-size="29" fill="#333333" textLength="64.47" lengthAdjust="spacingAndGlyphs" font-weight="bold">Back</text>
<text x="1526.41" y="896.00" font-size="29" fill="#333333" textLength="66.38" lengthAdjust="spacingAndGlyphs" font-weight="bold">Next</text>
</svg></body></html>
